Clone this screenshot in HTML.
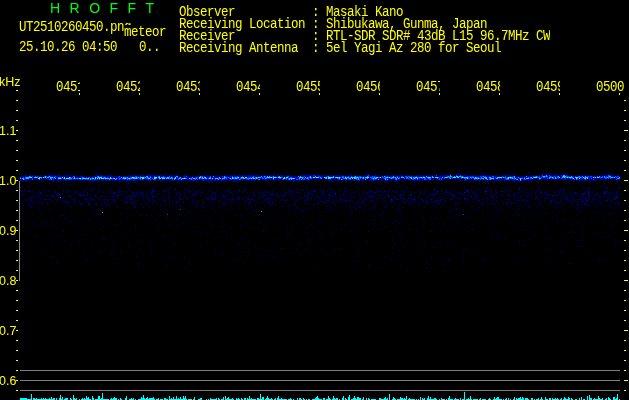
<!DOCTYPE html>
<html lang="en">
<head>
<meta charset="utf-8">
<title>HROFFT</title>
<style>
html,body{margin:0;padding:0;background:#000;}
body{width:629px;height:400px;overflow:hidden;position:relative;color:#ff0;}
.tl{top:78px;}
.g{margin-top:1px;will-change:transform;position:absolute;font-family:"Liberation Mono",monospace;font-size:12.5px;letter-spacing:-0.5px;line-height:15px;height:15px;white-space:pre;transform-origin:0 0;transform:scaleY(1.2133);color:#ffff00;overflow:hidden;}
.a{will-change:transform;position:absolute;left:-1px;font-family:"Liberation Sans",sans-serif;font-size:12.5px;line-height:20px;height:20px;white-space:pre;color:#ffff00;}
.t{will-change:transform;position:absolute;white-space:pre;word-spacing:5.6px;font-family:"Liberation Sans",sans-serif;font-size:14px;line-height:16px;color:#00ff00;top:0px;}
svg{position:absolute;left:0;top:0;}
.bg{background:#000;}
</style>
</head>
<body>
<svg width="629" height="400" viewBox="0 0 629 400" shape-rendering="crispEdges">
<g transform="translate(0,0.5)" stroke-width="1" fill="none">
<path stroke="#000088" d="M270 174h1M277 174h1M368 174h1M406 174h1M444 174h1M445 174h1M456 174h1M458 174h1M542 174h1M550 174h1M556 174h1M557 174h1M561 174h1M563 174h1M600 174h1M34 175h1M35 175h1M37 175h1M44 175h1M48 175h1M50 175h1M51 175h1M52 175h1M53 175h1M54 175h1M55 175h1M57 175h1M58 175h1M73 175h1M74 175h1M95 175h1M96 175h1M97 175h1M98 175h1M100 175h1M102 175h1M105 175h1M110 175h1M111 175h1M114 175h1M130 175h1M132 175h1M133 175h1M134 175h1M135 175h1M138 175h1M143 175h1M147 175h1M148 175h1M149 175h1M150 175h1M154 175h1M155 175h1M156 175h1M157 175h1M158 175h1M162 175h1M169 175h1M177 175h1M185 175h1M186 175h1M199 175h1M203 175h1M207 175h1M209 175h1M212 175h1M219 175h1M224 175h1M225 175h1M230 175h1M232 175h1M234 175h1M235 175h1M241 175h1M243 175h1M244 175h1M248 175h1M251 175h1M253 175h1M254 175h1M255 175h1M256 175h1M257 175h1M259 175h1M264 175h1M265 175h1M266 175h1M267 175h1M269 175h1M281 175h1M282 175h1M284 175h1M298 175h1M301 175h1M303 175h1M304 175h1M305 175h1M307 175h1M308 175h1M309 175h1M311 175h1M315 175h1M319 175h1M323 175h1M326 175h1M328 175h1M330 175h1M336 175h1M338 175h1M340 175h1M341 175h1M342 175h1M343 175h1M348 175h1M350 175h1M351 175h1M354 175h1M356 175h1M359 175h1M365 175h1M369 175h1M375 175h1M381 175h1M385 175h1M387 175h1M390 175h1M393 175h1M394 175h1M396 175h1M397 175h1M399 175h1M400 175h1M401 175h1M402 175h1M408 175h1M409 175h1M413 175h1M416 175h1M419 175h1M420 175h1M421 175h1M423 175h1M424 175h1M426 175h1M431 175h1M434 175h1M435 175h1M439 175h1M440 175h1M441 175h1M448 175h1M451 175h1M462 175h1M463 175h1M464 175h1M465 175h1M466 175h1M469 175h1M471 175h1M474 175h1M476 175h1M478 175h1M483 175h1M484 175h1M486 175h1M493 175h1M496 175h1M501 175h1M503 175h1M504 175h1M505 175h1M506 175h1M507 175h1M510 175h1M513 175h1M527 175h1M531 175h1M532 175h1M535 175h1M536 175h1M539 175h1M540 175h1M541 175h1M554 175h1M558 175h1M560 175h1M572 175h1M576 175h1M581 175h1M582 175h1M586 175h1M589 175h1M591 175h1M594 175h1M597 175h1M602 175h1M607 175h1M611 175h1M612 175h1M20 176h1M21 176h1M23 176h1M68 176h1M72 176h1M88 176h1M89 176h1M92 176h1M93 176h1M106 176h1M109 176h1M120 176h1M125 176h1M127 176h1M128 176h1M139 176h1M151 176h1M152 176h1M172 176h1M174 176h1M178 176h1M179 176h1M188 176h1M191 176h1M192 176h1M195 176h1M196 176h1M198 176h1M208 176h1M214 176h1M215 176h1M216 176h1M218 176h1M231 176h1M291 176h1M297 176h1M299 176h1M491 176h1M494 176h1M517 176h1M519 176h1M522 176h1M523 176h1M524 176h1M525 176h1M30 179h1M37 179h1M41 179h1M42 179h1M48 179h1M252 179h1M260 179h1M262 179h1M268 179h1M272 179h1M275 179h1M277 179h1M278 179h1M279 179h1M281 179h1M311 179h1M312 179h1M315 179h1M317 179h1M319 179h1M321 179h1M325 179h1M332 179h1M335 179h1M361 179h1M369 179h1M377 179h1M379 179h1M382 179h1M401 179h1M404 179h1M405 179h1M434 179h1M436 179h1M437 179h1M450 179h1M454 179h1M455 179h1M457 179h1M459 179h1M460 179h1M466 179h1M471 179h1M501 179h1M529 179h1M537 179h1M542 179h1M546 179h1M547 179h1M548 179h1M552 179h1M554 179h1M555 179h1M556 179h1M557 179h1M558 179h1M565 179h1M566 179h1M567 179h1M571 179h1M589 179h1M591 179h1M592 179h1M600 179h1M601 179h1M604 179h1M606 179h1M607 179h1M608 179h1M611 179h1M614 179h1M20 180h1M22 180h1M26 180h1M27 180h1M51 180h1M52 180h1M61 180h1M66 180h1M67 180h1M71 180h1M73 180h1M75 180h1M78 180h1M79 180h1M80 180h1M81 180h1M83 180h1M85 180h1M86 180h1M87 180h1M89 180h1M93 180h1M94 180h1M96 180h1M98 180h1M100 180h1M103 180h1M105 180h1M107 180h1M112 180h1M115 180h1M116 180h1M119 180h1M120 180h1M121 180h1M122 180h1M123 180h1M130 180h1M137 180h1M147 180h1M148 180h1M154 180h1M158 180h1M160 180h1M162 180h1M164 180h1M171 180h1M173 180h1M176 180h1M178 180h1M179 180h1M181 180h1M183 180h1M185 180h1M189 180h1M191 180h1M192 180h1M194 180h1M195 180h1M199 180h1M200 180h1M202 180h1M204 180h1M207 180h1M210 180h1M211 180h1M212 180h1M215 180h1M216 180h1M217 180h1M218 180h1M220 180h1M223 180h1M224 180h1M228 180h1M231 180h1M233 180h1M236 180h1M242 180h1M244 180h1M246 180h1M253 180h1M254 180h1M255 180h1M258 180h1M265 180h1M266 180h1M282 180h1M284 180h1M287 180h1M289 180h1M290 180h1M292 180h1M295 180h1M296 180h1M307 180h1M308 180h1M309 180h1M326 180h1M330 180h1M337 180h1M338 180h1M345 180h1M346 180h1M347 180h1M348 180h1M353 180h1M357 180h1M378 180h1M380 180h1M384 180h1M386 180h1M388 180h1M391 180h1M397 180h1M399 180h1M414 180h1M415 180h1M418 180h1M422 180h1M424 180h1M425 180h1M427 180h1M429 180h1M440 180h1M441 180h1M464 180h1M467 180h1M473 180h1M476 180h1M481 180h1M487 180h1M488 180h1M490 180h1M494 180h1M496 180h1M498 180h1M506 180h1M510 180h1M514 180h1M516 180h1M517 180h1M521 180h1M524 180h1M525 180h1M526 180h1M527 180h1M528 180h1M531 180h1M573 180h1M574 180h1M579 180h1M582 180h1M586 180h1M588 180h1M594 180h1M617 180h1M127 181h1M294 181h1M519 181h1M522 181h1"/>
<path stroke="#0050ff" d="M314 175h1M368 175h1M436 175h1M456 175h1M460 175h1M542 175h1M549 175h1M566 175h1M608 175h1M609 175h1M30 176h1M32 176h1M35 176h1M37 176h1M44 176h1M46 176h1M48 176h1M50 176h1M55 176h1M73 176h1M74 176h1M97 176h1M101 176h1M119 176h1M135 176h1M136 176h1M140 176h1M150 176h1M154 176h1M158 176h1M163 176h1M169 176h1M186 176h1M201 176h1M202 176h1M204 176h1M210 176h1M222 176h1M232 176h1M237 176h1M242 176h1M253 176h1M265 176h1M278 176h1M287 176h1M288 176h1M304 176h1M309 176h1M319 176h1M327 176h1M342 176h1M343 176h1M345 176h1M348 176h1M351 176h1M354 176h1M357 176h1M359 176h1M360 176h1M368 176h1M372 176h1M374 176h1M382 176h1M385 176h1M387 176h1M397 176h1M401 176h1M402 176h1M405 176h1M406 176h1M408 176h1M409 176h1M411 176h1M416 176h1M423 176h1M447 176h1M449 176h1M458 176h1M461 176h1M467 176h1M470 176h1M472 176h1M480 176h1M482 176h1M485 176h1M492 176h1M493 176h1M502 176h1M505 176h1M510 176h1M513 176h1M533 176h1M535 176h1M537 176h1M539 176h1M547 176h1M551 176h1M554 176h1M557 176h1M566 176h1M568 176h1M575 176h1M578 176h1M587 176h1M588 176h1M590 176h1M591 176h1M597 176h1M602 176h1M606 176h1M615 176h1M617 176h1M618 176h1M20 177h1M23 177h1M25 177h1M72 177h1M86 177h1M88 177h1M89 177h1M92 177h1M105 177h1M107 177h1M118 177h1M126 177h1M139 177h1M172 177h1M177 177h1M179 177h1M184 177h1M196 177h1M197 177h1M209 177h1M233 177h1M234 177h1M248 177h1M290 177h1M291 177h1M373 177h1M493 177h1M495 177h1M524 177h1M32 178h1M41 178h1M46 178h1M226 178h1M238 178h1M252 178h1M262 178h1M263 178h1M269 178h1M279 178h1M280 178h1M310 178h1M311 178h1M320 178h1M337 178h1M360 178h1M365 178h1M366 178h1M371 178h1M390 178h1M392 178h1M393 178h1M395 178h1M399 178h1M404 178h1M406 178h1M407 178h1M408 178h1M410 178h1M437 178h1M439 178h1M441 178h1M444 178h1M449 178h1M452 178h1M461 178h1M464 178h1M466 178h1M469 178h1M471 178h1M499 178h1M501 178h1M529 178h1M530 178h1M531 178h1M547 178h1M552 178h1M553 178h1M554 178h1M556 178h1M558 178h1M561 178h1M565 178h1M589 178h1M591 178h1M605 178h1M606 178h1M608 178h1M610 178h1M24 179h1M32 179h1M39 179h1M49 179h1M58 179h1M65 179h1M69 179h1M70 179h1M80 179h1M82 179h1M85 179h1M87 179h1M88 179h1M92 179h1M94 179h1M95 179h1M97 179h1M99 179h1M105 179h1M116 179h1M119 179h1M124 179h1M129 179h1M130 179h1M140 179h1M142 179h1M148 179h1M150 179h1M153 179h1M154 179h1M159 179h1M172 179h1M178 179h1M191 179h1M195 179h1M197 179h1M215 179h1M222 179h1M231 179h1M240 179h1M247 179h1M248 179h1M255 179h1M258 179h1M273 179h1M283 179h1M286 179h1M288 179h1M296 179h1M297 179h1M299 179h1M303 179h1M304 179h1M308 179h1M339 179h1M342 179h1M346 179h1M349 179h1M350 179h1M356 179h1M357 179h1M359 179h1M373 179h1M374 179h1M375 179h1M386 179h1M395 179h1M409 179h1M412 179h1M413 179h1M417 179h1M424 179h1M425 179h1M429 179h1M430 179h1M439 179h1M441 179h1M465 179h1M474 179h1M477 179h1M480 179h1M483 179h1M486 179h1M489 179h1M493 179h1M506 179h1M507 179h1M508 179h1M514 179h1M524 179h1M525 179h1M539 179h1M574 179h1M576 179h1M577 179h1M585 179h1M593 179h1M616 179h1"/>
<path stroke="#00c8ff" d="M450 176h1M456 176h1M459 176h1M543 176h1M544 176h1M546 176h1M564 176h1M565 176h1M609 176h1M26 177h1M27 177h1M28 177h1M29 177h1M34 177h1M35 177h1M40 177h1M41 177h1M47 177h1M48 177h1M50 177h1M51 177h1M74 177h1M99 177h1M101 177h1M104 177h1M121 177h1M123 177h1M136 177h1M138 177h1M141 177h1M145 177h1M147 177h1M150 177h1M158 177h1M161 177h1M163 177h1M168 177h1M204 177h1M219 177h1M224 177h1M225 177h1M235 177h1M237 177h1M242 177h1M252 177h1M253 177h1M256 177h1M259 177h1M260 177h1M269 177h1M273 177h1M276 177h1M301 177h1M302 177h1M305 177h1M320 177h1M325 177h1M332 177h1M335 177h1M338 177h1M342 177h1M347 177h1M348 177h1M352 177h1M353 177h1M355 177h1M356 177h1M360 177h1M365 177h1M366 177h1M374 177h1M376 177h1M386 177h1M392 177h1M393 177h1M395 177h1M401 177h1M402 177h1M403 177h1M407 177h1M411 177h1M413 177h1M420 177h1M427 177h1M430 177h1M432 177h1M433 177h1M435 177h1M442 177h1M445 177h1M447 177h1M449 177h1M457 177h1M461 177h1M463 177h1M464 177h1M465 177h1M466 177h1M467 177h1M470 177h1M473 177h1M481 177h1M484 177h1M485 177h1M486 177h1M489 177h1M490 177h1M497 177h1M499 177h1M501 177h1M503 177h1M509 177h1M511 177h1M512 177h1M514 177h1M531 177h1M533 177h1M549 177h1M550 177h1M555 177h1M562 177h1M571 177h1M572 177h1M575 177h1M577 177h1M580 177h1M585 177h1M586 177h1M587 177h1M607 177h1M611 177h1M612 177h1M614 177h1M619 177h1M20 178h1M22 178h1M23 178h1M26 178h1M27 178h1M50 178h1M55 178h1M58 178h1M69 178h1M71 178h1M77 178h1M82 178h1M85 178h1M86 178h1M87 178h1M90 178h1M92 178h1M102 178h1M106 178h1M107 178h1M108 178h1M111 178h1M113 178h1M116 178h1M124 178h1M128 178h1M131 178h1M133 178h1M134 178h1M135 178h1M140 178h1M148 178h1M159 178h1M168 178h1M170 178h1M172 178h1M174 178h1M179 178h1M182 178h1M183 178h1M185 178h1M191 178h1M193 178h1M196 178h1M202 178h1M203 178h1M205 178h1M206 178h1M210 178h1M215 178h1M216 178h1M220 178h1M222 178h1M223 178h1M224 178h1M233 178h1M235 178h1M243 178h1M244 178h1M249 178h1M254 178h1M265 178h1M289 178h1M290 178h1M292 178h1M294 178h1M299 178h1M302 178h1M307 178h1M326 178h1M329 178h1M330 178h1M339 178h1M345 178h1M349 178h1M350 178h1M355 178h1M356 178h1M358 178h1M375 178h1M376 178h1M385 178h1M398 178h1M474 178h1M475 178h1M482 178h1M483 178h1M485 178h1M490 178h1M492 178h1M493 178h1M496 178h1M497 178h1M507 178h1M512 178h1M515 178h1M520 178h1M521 178h1M524 178h1M526 178h1M528 178h1M584 178h1"/>
<path stroke="#0000e8" d="M270 175h1M277 175h1M313 175h1M443 175h1M457 175h1M544 175h1M545 175h1M548 175h1M555 175h1M556 175h1M561 175h1M562 175h1M565 175h1M567 175h1M25 176h1M26 176h1M28 176h1M47 176h1M52 176h1M53 176h1M54 176h1M56 176h1M59 176h1M62 176h1M63 176h1M81 176h1M82 176h1M94 176h1M95 176h1M100 176h1M102 176h1M103 176h1M104 176h1M110 176h1M112 176h1M114 176h1M118 176h1M123 176h1M124 176h1M130 176h1M131 176h1M132 176h1M137 176h1M143 176h1M148 176h1M149 176h1M155 176h1M156 176h1M157 176h1M162 176h1M164 176h1M171 176h1M184 176h1M185 176h1M199 176h1M203 176h1M207 176h1M209 176h1M212 176h1M225 176h1M226 176h1M227 176h1M230 176h1M234 176h1M235 176h1M236 176h1M238 176h1M239 176h1M240 176h1M244 176h1M246 176h1M248 176h1M249 176h1M250 176h1M251 176h1M252 176h1M254 176h1M255 176h1M257 176h1M259 176h1M260 176h1M263 176h1M270 176h1M271 176h1M272 176h1M275 176h1M276 176h1M281 176h1M284 176h1M289 176h1M301 176h1M303 176h1M312 176h1M314 176h1M317 176h1M320 176h1M321 176h1M322 176h1M325 176h1M326 176h1M329 176h1M331 176h1M334 176h1M335 176h1M337 176h1M339 176h1M340 176h1M341 176h1M347 176h1M349 176h1M350 176h1M356 176h1M358 176h1M361 176h1M363 176h1M364 176h1M365 176h1M369 176h1M370 176h1M373 176h1M375 176h1M376 176h1M381 176h1M386 176h1M389 176h1M392 176h1M395 176h1M398 176h1M407 176h1M412 176h1M414 176h1M415 176h1M417 176h1M418 176h1M419 176h1M420 176h1M422 176h1M424 176h1M427 176h1M428 176h1M430 176h1M431 176h1M436 176h1M439 176h1M440 176h1M443 176h1M446 176h1M452 176h1M455 176h1M463 176h1M468 176h1M469 176h1M471 176h1M473 176h1M474 176h1M477 176h1M478 176h1M479 176h1M484 176h1M486 176h1M489 176h1M490 176h1M499 176h1M503 176h1M509 176h1M512 176h1M530 176h1M534 176h1M541 176h1M552 176h1M570 176h1M572 176h1M573 176h1M580 176h1M581 176h1M584 176h1M586 176h1M589 176h1M592 176h1M593 176h1M594 176h1M596 176h1M600 176h1M601 176h1M603 176h1M605 176h1M611 176h1M612 176h1M613 176h1M619 176h1M24 177h1M61 177h1M66 177h1M67 177h1M68 177h1M71 177h1M77 177h1M79 177h1M80 177h1M81 177h1M94 177h1M106 177h1M108 177h1M109 177h1M111 177h1M113 177h1M114 177h1M115 177h1M119 177h1M120 177h1M122 177h1M129 177h1M151 177h1M152 177h1M170 177h1M174 177h1M185 177h1M186 177h1M187 177h1M189 177h1M190 177h1M194 177h1M206 177h1M207 177h1M212 177h1M213 177h1M214 177h1M218 177h1M220 177h1M222 177h1M231 177h1M288 177h1M289 177h1M295 177h1M296 177h1M298 177h1M480 177h1M494 177h1M506 177h1M516 177h1M517 177h1M519 177h1M520 177h1M521 177h1M525 177h1M545 177h1M30 178h1M31 178h1M34 178h1M35 178h1M36 178h1M37 178h1M42 178h1M48 178h1M52 178h1M225 178h1M227 178h1M239 178h1M258 178h1M259 178h1M260 178h1M261 178h1M264 178h1M267 178h1M268 178h1M271 178h1M272 178h1M274 178h1M275 178h1M277 178h1M281 178h1M309 178h1M314 178h1M315 178h1M316 178h1M332 178h1M334 178h1M335 178h1M347 178h1M359 178h1M364 178h1M368 178h1M370 178h1M379 178h1M381 178h1M383 178h1M386 178h1M387 178h1M388 178h1M394 178h1M400 178h1M405 178h1M412 178h1M416 178h1M418 178h1M420 178h1M421 178h1M423 178h1M431 178h1M432 178h1M436 178h1M443 178h1M445 178h1M447 178h1M448 178h1M451 178h1M455 178h1M458 178h1M459 178h1M468 178h1M470 178h1M472 178h1M498 178h1M500 178h1M533 178h1M537 178h1M541 178h1M544 178h1M545 178h1M548 178h1M557 178h1M560 178h1M562 178h1M563 178h1M567 178h1M568 178h1M571 178h1M578 178h1M581 178h1M583 178h1M590 178h1M597 178h1M600 178h1M601 178h1M604 178h1M611 178h1M615 178h1M616 178h1M20 179h1M27 179h1M28 179h1M38 179h1M50 179h1M52 179h1M53 179h1M54 179h1M56 179h1M60 179h1M63 179h1M64 179h1M66 179h1M67 179h1M68 179h1M71 179h1M73 179h1M75 179h1M76 179h1M77 179h1M83 179h1M86 179h1M89 179h1M93 179h1M96 179h1M101 179h1M103 179h1M107 179h1M108 179h1M111 179h1M112 179h1M114 179h1M118 179h1M120 179h1M123 179h1M125 179h1M126 179h1M128 179h1M131 179h1M132 179h1M133 179h1M135 179h1M138 179h1M139 179h1M141 179h1M143 179h1M145 179h1M147 179h1M149 179h1M151 179h1M155 179h1M161 179h1M162 179h1M163 179h1M164 179h1M165 179h1M166 179h1M170 179h1M173 179h1M175 179h1M176 179h1M177 179h1M180 179h1M182 179h1M183 179h1M188 179h1M189 179h1M190 179h1M192 179h1M193 179h1M194 179h1M196 179h1M198 179h1M201 179h1M204 179h1M206 179h1M207 179h1M208 179h1M210 179h1M211 179h1M212 179h1M217 179h1M219 179h1M221 179h1M224 179h1M225 179h1M227 179h1M230 179h1M233 179h1M234 179h1M235 179h1M236 179h1M242 179h1M246 179h1M249 179h1M250 179h1M251 179h1M253 179h1M265 179h1M266 179h1M267 179h1M274 179h1M282 179h1M284 179h1M285 179h1M293 179h1M300 179h1M305 179h1M309 179h1M327 179h1M330 179h1M337 179h1M338 179h1M345 179h1M348 179h1M353 179h1M362 179h1M363 179h1M370 179h1M371 179h1M372 179h1M376 179h1M388 179h1M391 179h1M397 179h1M398 179h1M399 179h1M408 179h1M411 179h1M414 179h1M415 179h1M416 179h1M418 179h1M419 179h1M421 179h1M422 179h1M426 179h1M427 179h1M428 179h1M438 179h1M464 179h1M475 179h1M476 179h1M479 179h1M481 179h1M484 179h1M488 179h1M491 179h1M495 179h1M496 179h1M498 179h1M505 179h1M509 179h1M511 179h1M515 179h1M521 179h1M523 179h1M527 179h1M528 179h1M531 179h1M570 179h1M572 179h1M573 179h1M579 179h1M580 179h1M581 179h1M584 179h1M586 179h1M594 179h1M617 179h1M619 179h1M127 180h1M293 180h1M294 180h1M519 180h1"/>
<path stroke="#000070" d="M42 171h1M406 171h1M434 171h1M568 171h1M51 172h1M53 172h1M68 172h1M96 172h1M178 172h1M219 172h1M234 172h1M244 172h1M250 172h1M275 172h1M285 172h1M383 172h1M468 172h1M486 172h1M508 172h1M528 172h1M596 172h1M100 173h1M166 173h1M214 173h1M270 173h1M355 173h1M389 173h1M440 173h1M456 173h1M457 173h1M458 173h1M459 173h1M466 173h1M481 173h1M482 173h1M492 173h1M514 173h1M543 173h1M546 173h1M550 173h1M557 173h1M562 173h1M566 173h1M567 173h1M603 173h1M609 173h1M25 174h1M26 174h1M30 174h1M50 174h1M58 174h1M67 174h1M68 174h1M96 174h1M97 174h1M107 174h1M110 174h1M122 174h1M130 174h1M135 174h1M142 174h1M143 174h1M148 174h1M149 174h1M150 174h1M159 174h1M163 174h1M164 174h1M165 174h1M168 174h1M171 174h1M176 174h1M199 174h1M212 174h1M229 174h1M230 174h1M239 174h1M246 174h1M251 174h1M254 174h1M256 174h1M273 174h1M279 174h1M282 174h1M285 174h1M304 174h1M305 174h1M316 174h1M319 174h1M323 174h1M332 174h1M345 174h1M350 174h1M351 174h1M355 174h1M365 174h1M367 174h1M369 174h1M376 174h1M380 174h1M381 174h1M388 174h1M397 174h1M403 174h1M405 174h1M418 174h1M429 174h1M432 174h1M433 174h1M449 174h1M451 174h1M453 174h1M461 174h1M464 174h1M465 174h1M469 174h1M476 174h1M482 174h1M487 174h1M496 174h1M498 174h1M505 174h1M507 174h1M513 174h1M541 174h1M553 174h1M570 174h1M579 174h1M583 174h1M584 174h1M587 174h1M598 174h1M602 174h1M603 174h1M606 174h1M607 174h1M611 174h1M612 174h1M613 174h1M617 174h1M21 175h1M67 175h1M70 175h1M71 175h1M75 175h1M109 175h1M152 175h1M174 175h1M189 175h1M216 175h1M217 175h1M221 175h1M231 175h1M294 175h1M35 180h1M41 180h1M42 180h1M226 180h1M279 180h1M319 180h1M331 180h1M332 180h1M361 180h1M368 180h1M369 180h1M400 180h1M402 180h1M405 180h1M407 180h1M423 180h1M437 180h1M459 180h1M460 180h1M462 180h1M466 180h1M471 180h1M499 180h1M500 180h1M535 180h1M541 180h1M559 180h1M571 180h1M590 180h1M591 180h1M598 180h1M599 180h1M604 180h1M605 180h1M612 180h1M23 181h1M26 181h1M51 181h1M53 181h1M56 181h1M58 181h1M67 181h1M83 181h1M93 181h1M98 181h1M109 181h1M114 181h1M118 181h1M119 181h1M144 181h1M151 181h1M165 181h1M173 181h1M177 181h1M182 181h1M192 181h1M202 181h1M205 181h1M208 181h1M211 181h1M218 181h1M221 181h1M224 181h1M232 181h1M234 181h1M236 181h1M239 181h1M247 181h1M254 181h1M329 181h1M337 181h1M350 181h1M356 181h1M359 181h1M362 181h1M375 181h1M376 181h1M387 181h1M388 181h1M391 181h1M395 181h1M396 181h1M414 181h1M416 181h1M428 181h1M458 181h1M486 181h1M487 181h1M496 181h1M504 181h1M508 181h1M514 181h1M523 181h1M531 181h1M569 181h1M574 181h1M580 181h1M616 181h1M617 181h1M127 182h1M135 182h1M211 182h1M280 182h1M298 182h1M386 182h1M413 182h1M415 182h1M519 182h1M529 182h1M536 182h1M538 182h1M49 183h1M63 183h1M144 183h1M206 183h1M337 183h1M396 183h1M437 183h1M487 183h1M516 183h1M569 183h1M595 183h1M127 184h1M179 184h1M293 184h1"/>
<path stroke="#0000a0" d="M444 176h1M32 177h1M42 177h1M203 177h1M247 177h1M254 177h1M381 177h1M398 177h1M400 177h1M441 177h1M487 177h1M529 177h1M548 177h1M554 177h1M560 177h1M582 177h1M592 177h1M596 177h1M21 178h1M24 178h1M96 178h1M117 178h1M158 178h1M221 178h1M301 178h1M351 178h1M426 178h1M484 178h1M494 178h1M516 178h1M574 178h1M575 178h1"/>
<path stroke="#000098" d="M312 175h1M445 175h1M459 175h1M610 175h1M22 176h1M27 176h1M31 176h1M36 176h1M38 176h1M39 176h1M40 176h1M51 176h1M57 176h1M60 176h1M64 176h1M69 176h1M99 176h1M105 176h1M107 176h1M111 176h1M122 176h1M133 176h1M138 176h1M141 176h1M144 176h1M145 176h1M153 176h1M161 176h1M165 176h1M166 176h1M167 176h1M168 176h1M170 176h1M175 176h1M183 176h1M205 176h1M219 176h1M223 176h1M228 176h1M229 176h1M262 176h1M266 176h1M268 176h1M274 176h1M277 176h1M282 176h1M302 176h1M306 176h1M308 176h1M313 176h1M318 176h1M332 176h1M336 176h1M344 176h1M346 176h1M352 176h1M366 176h1M371 176h1M377 176h1M378 176h1M388 176h1M390 176h1M391 176h1M394 176h1M396 176h1M399 176h1M403 176h1M413 176h1M425 176h1M429 176h1M434 176h1M435 176h1M441 176h1M442 176h1M465 176h1M475 176h1M476 176h1M481 176h1M487 176h1M488 176h1M496 176h1M497 176h1M506 176h1M508 176h1M515 176h1M527 176h1M528 176h1M529 176h1M531 176h1M538 176h1M548 176h1M553 176h1M559 176h1M569 176h1M577 176h1M595 176h1M607 176h1M614 176h1M616 176h1M22 177h1M73 177h1M76 177h1M78 177h1M84 177h1M91 177h1M93 177h1M112 177h1M117 177h1M128 177h1M146 177h1M173 177h1M181 177h1M183 177h1M191 177h1M195 177h1M198 177h1M208 177h1M215 177h1M216 177h1M217 177h1M292 177h1M293 177h1M294 177h1M297 177h1M304 177h1M482 177h1M491 177h1M496 177h1M515 177h1M522 177h1M523 177h1M526 177h1M527 177h1M29 178h1M40 178h1M44 178h1M47 178h1M270 178h1M276 178h1M278 178h1M312 178h1M313 178h1M317 178h1M318 178h1M319 178h1M322 178h1M331 178h1M336 178h1M342 178h1M361 178h1M377 178h1M378 178h1M389 178h1M401 178h1M402 178h1M403 178h1M427 178h1M433 178h1M442 178h1M446 178h1M454 178h1M456 178h1M457 178h1M534 178h1M535 178h1M536 178h1M538 178h1M542 178h1M543 178h1M546 178h1M551 178h1M566 178h1M569 178h1M592 178h1M593 178h1M596 178h1M599 178h1M602 178h1M603 178h1M612 178h1M21 179h1M22 179h1M25 179h1M26 179h1M61 179h1M72 179h1M74 179h1M79 179h1M81 179h1M84 179h1M91 179h1M98 179h1M102 179h1M106 179h1M110 179h1M117 179h1M122 179h1M137 179h1M146 179h1M167 179h1M168 179h1M169 179h1M185 179h1M186 179h1M187 179h1M199 179h1M202 179h1M203 179h1M205 179h1M213 179h1M214 179h1M220 179h1M223 179h1M232 179h1M237 179h1M238 179h1M243 179h1M244 179h1M257 179h1M290 179h1M292 179h1M298 179h1M306 179h1M307 179h1M328 179h1M329 179h1M343 179h1M344 179h1M352 179h1M354 179h1M355 179h1M380 179h1M381 179h1M432 179h1M433 179h1M467 179h1M492 179h1M494 179h1M497 179h1M503 179h1M510 179h1M513 179h1M518 179h1M519 179h1M526 179h1M578 179h1M582 179h1M588 179h1M618 179h1M103 205h1M255 205h1M359 206h1M454 206h1M555 206h1M143 207h1M385 207h1M39 209h1M186 209h1M364 209h1M419 209h1M576 209h1M171 210h1M398 210h1M518 210h1M332 211h1M189 212h1M301 212h1M400 212h1M579 212h1M519 215h1M457 217h1M491 217h1M241 218h1M260 222h1M107 223h1M545 224h1M523 226h1M409 229h1M263 231h1M368 231h1M307 232h1M569 232h1M226 234h1M104 238h1M79 241h1M519 241h1M524 245h1M281 248h1M249 250h1M561 251h1M358 252h1M111 254h1M444 258h1M261 260h1M569 263h1"/>
<path stroke="#0000d0" d="M313 174h1M450 174h1M460 174h1M546 174h1M548 174h1M564 174h1M25 175h1M30 175h1M32 175h1M40 175h1M45 175h1M49 175h1M59 175h1M64 175h1M69 175h1M81 175h1M101 175h1M137 175h1M141 175h1M146 175h1M153 175h1M160 175h1M170 175h1M175 175h1M176 175h1M184 175h1M202 175h1M205 175h1M239 175h1M242 175h1M245 175h1M249 175h1M250 175h1M263 175h1M273 175h1M280 175h1M287 175h1M288 175h1M302 175h1M306 175h1M310 175h1M317 175h1M318 175h1M321 175h1M324 175h1M331 175h1M335 175h1M337 175h1M366 175h1M367 175h1M374 175h1M377 175h1M386 175h1M392 175h1M407 175h1M417 175h1M429 175h1M446 175h1M447 175h1M473 175h1M480 175h1M482 175h1M485 175h1M489 175h1M490 175h1M508 175h1M514 175h1M547 175h1M551 175h1M553 175h1M585 175h1M604 175h1M605 175h1M606 175h1M617 175h1M618 175h1M61 176h1M67 176h1M76 176h1M77 176h1M80 176h1M84 176h1M86 176h1M116 176h1M197 176h1M290 176h1M292 176h1M295 176h1M495 176h1M29 179h1M31 179h1M36 179h1M44 179h1M45 179h1M226 179h1M264 179h1M270 179h1M271 179h1M331 179h1M389 179h1M442 179h1M468 179h1M469 179h1M500 179h1M502 179h1M530 179h1M533 179h1M551 179h1M560 179h1M563 179h1M564 179h1M569 179h1M596 179h1M605 179h1M21 180h1M25 180h1M53 180h1M57 180h1M58 180h1M63 180h1M65 180h1M90 180h1M91 180h1M92 180h1M95 180h1M101 180h1M102 180h1M106 180h1M109 180h1M113 180h1M114 180h1M126 180h1M128 180h1M133 180h1M134 180h1M135 180h1M140 180h1M142 180h1M150 180h1M155 180h1M161 180h1M169 180h1M180 180h1M190 180h1M193 180h1M203 180h1M206 180h1M208 180h1M214 180h1M221 180h1M234 180h1M235 180h1M238 180h1M248 180h1M251 180h1M273 180h1M299 180h1M303 180h1M328 180h1M351 180h1M352 180h1M354 180h1M359 180h1M363 180h1M365 180h1M371 180h1M372 180h1M373 180h1M381 180h1M385 180h1M387 180h1M395 180h1M396 180h1M412 180h1M417 180h1M419 180h1M465 180h1M475 180h1M479 180h1M485 180h1M503 180h1M504 180h1M509 180h1M512 180h1M513 180h1M518 180h1M576 180h1M581 180h1M584 180h1M585 180h1M593 180h1M293 181h1"/>
<path stroke="#00b0ff" d="M450 175h1M546 175h1M563 175h1M564 175h1M29 176h1M45 176h1M49 176h1M98 176h1M146 176h1M147 176h1M159 176h1M176 176h1M177 176h1M200 176h1M213 176h1M224 176h1M261 176h1M264 176h1M267 176h1M269 176h1M273 176h1M279 176h1M298 176h1M300 176h1M310 176h1M315 176h1M328 176h1M333 176h1M355 176h1M367 176h1M384 176h1M393 176h1M426 176h1M432 176h1M448 176h1M451 176h1M454 176h1M460 176h1M462 176h1M483 176h1M514 176h1M526 176h1M536 176h1M558 176h1M571 176h1M579 176h1M582 176h1M585 176h1M599 176h1M604 176h1M610 176h1M70 177h1M125 177h1M127 177h1M134 177h1M140 177h1M162 177h1M180 177h1M192 177h1M210 177h1M299 177h1M307 177h1M518 177h1M28 178h1M321 178h1M325 178h1M363 178h1M367 178h1M391 178h1M396 178h1M450 178h1M532 178h1M539 178h1M540 178h1M549 178h1M555 178h1M23 179h1M51 179h1M90 179h1M109 179h1M115 179h1M174 179h1M181 179h1M218 179h1M239 179h1M259 179h1M289 179h1M291 179h1M301 179h1M341 179h1M358 179h1M365 179h1M378 179h1M385 179h1M387 179h1M396 179h1M487 179h1M490 179h1M516 179h1M517 179h1M520 180h1"/>
<path stroke="#0068ff" d="M542 176h1M545 176h1M550 176h1M562 176h1M567 176h1M608 176h1M37 177h1M44 177h1M58 177h1M59 177h1M60 177h1M82 177h1M83 177h1M96 177h1M97 177h1M103 177h1M124 177h1M130 177h1M131 177h1M135 177h1M137 177h1M144 177h1M148 177h1M164 177h1M165 177h1M169 177h1M226 177h1M228 177h1M236 177h1M250 177h1M255 177h1M257 177h1M262 177h1M264 177h1M266 177h1M272 177h1M281 177h1M282 177h1M303 177h1M309 177h1M311 177h1M315 177h1M340 177h1M343 177h1M346 177h1M350 177h1M358 177h1M359 177h1M361 177h1M362 177h1M370 177h1M371 177h1M372 177h1M375 177h1M378 177h1M379 177h1M382 177h1M383 177h1M385 177h1M388 177h1M390 177h1M391 177h1M394 177h1M399 177h1M406 177h1M409 177h1M414 177h1M417 177h1M418 177h1M419 177h1M422 177h1M438 177h1M444 177h1M450 177h1M452 177h1M468 177h1M471 177h1M472 177h1M476 177h1M477 177h1M478 177h1M502 177h1M504 177h1M505 177h1M507 177h1M528 177h1M530 177h1M537 177h1M538 177h1M539 177h1M541 177h1M543 177h1M544 177h1M551 177h1M553 177h1M557 177h1M558 177h1M563 177h1M565 177h1M566 177h1M568 177h1M578 177h1M579 177h1M581 177h1M584 177h1M594 177h1M599 177h1M600 177h1M601 177h1M602 177h1M604 177h1M605 177h1M606 177h1M608 177h1M609 177h1M610 177h1M613 177h1M616 177h1M25 178h1M51 178h1M53 178h1M61 178h1M63 178h1M70 178h1M73 178h1M75 178h1M76 178h1M78 178h1M81 178h1M91 178h1M100 178h1M104 178h1M109 178h1M112 178h1M119 178h1M120 178h1M122 178h1M126 178h1M127 178h1M130 178h1M132 178h1M137 178h1M139 178h1M144 178h1M146 178h1M147 178h1M152 178h1M156 178h1M167 178h1M169 178h1M171 178h1M178 178h1M180 178h1M181 178h1M186 178h1M190 178h1M195 178h1M201 178h1M204 178h1M208 178h1M218 178h1M219 178h1M229 178h1M234 178h1M237 178h1M240 178h1M241 178h1M242 178h1M245 178h1M246 178h1M247 178h1M248 178h1M250 178h1M255 178h1M257 178h1M266 178h1M285 178h1M286 178h1M288 178h1M304 178h1M306 178h1M308 178h1M338 178h1M343 178h1M344 178h1M348 178h1M362 178h1M372 178h1M374 178h1M384 178h1M413 178h1M415 178h1M419 178h1M422 178h1M424 178h1M425 178h1M428 178h1M429 178h1M430 178h1M465 178h1M477 178h1M479 178h1M480 178h1M481 178h1M489 178h1M505 178h1M506 178h1M510 178h1M511 178h1M513 178h1M514 178h1M519 178h1M522 178h1M570 178h1M572 178h1M577 178h1M582 178h1M617 178h1M619 178h1M127 179h1"/>
<path stroke="#30ffd0" d="M457 176h1M563 176h1M30 177h1M31 177h1M36 177h1M39 177h1M43 177h1M45 177h1M52 177h1M54 177h1M62 177h1M64 177h1M69 177h1M95 177h1M98 177h1M100 177h1M110 177h1M132 177h1M133 177h1M142 177h1M143 177h1M154 177h1M155 177h1M156 177h1M159 177h1M167 177h1M171 177h1M175 177h1M199 177h1M200 177h1M202 177h1M205 177h1M232 177h1M238 177h1M241 177h1M243 177h1M245 177h1M246 177h1M258 177h1M267 177h1M268 177h1M270 177h1M271 177h1M274 177h1M275 177h1M278 177h1M279 177h1M280 177h1M284 177h1M286 177h1M287 177h1M300 177h1M310 177h1M313 177h1M314 177h1M316 177h1M317 177h1M318 177h1M324 177h1M326 177h1M328 177h1M329 177h1M330 177h1M331 177h1M333 177h1M336 177h1M337 177h1M339 177h1M345 177h1M351 177h1M354 177h1M357 177h1M363 177h1M367 177h1M368 177h1M377 177h1M380 177h1M387 177h1M389 177h1M397 177h1M410 177h1M415 177h1M416 177h1M421 177h1M423 177h1M424 177h1M428 177h1M429 177h1M436 177h1M437 177h1M446 177h1M453 177h1M454 177h1M455 177h1M458 177h1M462 177h1M475 177h1M498 177h1M500 177h1M508 177h1M510 177h1M534 177h1M535 177h1M536 177h1M552 177h1M559 177h1M564 177h1M567 177h1M569 177h1M570 177h1M576 177h1M583 177h1M593 177h1M595 177h1M597 177h1M598 177h1M38 178h1M39 178h1M59 178h1M60 178h1M64 178h1M66 178h1M67 178h1M68 178h1M74 178h1M79 178h1M80 178h1M83 178h1M84 178h1M88 178h1M93 178h1M95 178h1M97 178h1M99 178h1M101 178h1M103 178h1M105 178h1M110 178h1M114 178h1M123 178h1M125 178h1M129 178h1M136 178h1M142 178h1M143 178h1M149 178h1M154 178h1M155 178h1M160 178h1M162 178h1M163 178h1M164 178h1M166 178h1M175 178h1M184 178h1M189 178h1M194 178h1M199 178h1M209 178h1M212 178h1M217 178h1M230 178h1M232 178h1M236 178h1M251 178h1M253 178h1M256 178h1M273 178h1M283 178h1M284 178h1M291 178h1M293 178h1M328 178h1M346 178h1M352 178h1M354 178h1M373 178h1M411 178h1M414 178h1M417 178h1M467 178h1M476 178h1M478 178h1M486 178h1M491 178h1M508 178h1M527 178h1M573 178h1M576 178h1M579 178h1M585 178h1M587 178h1M618 178h1M520 179h1"/>
<path stroke="#0008ff" d="M549 176h1M555 176h1M556 176h1M561 176h1M33 177h1M38 177h1M46 177h1M49 177h1M53 177h1M55 177h1M56 177h1M57 177h1M102 177h1M149 177h1M157 177h1M160 177h1M166 177h1M176 177h1M201 177h1M223 177h1M227 177h1M229 177h1M230 177h1M239 177h1M240 177h1M249 177h1M251 177h1M261 177h1M263 177h1M265 177h1M277 177h1M283 177h1M285 177h1M306 177h1M308 177h1M312 177h1M319 177h1M321 177h1M322 177h1M323 177h1M327 177h1M334 177h1M341 177h1M344 177h1M349 177h1M364 177h1M369 177h1M384 177h1M396 177h1M404 177h1M405 177h1M408 177h1M412 177h1M425 177h1M426 177h1M431 177h1M434 177h1M439 177h1M440 177h1M443 177h1M448 177h1M451 177h1M456 177h1M459 177h1M460 177h1M469 177h1M474 177h1M483 177h1M488 177h1M492 177h1M513 177h1M532 177h1M540 177h1M542 177h1M546 177h1M547 177h1M556 177h1M561 177h1M573 177h1M574 177h1M588 177h1M589 177h1M590 177h1M591 177h1M603 177h1M615 177h1M617 177h1M618 177h1M54 178h1M57 178h1M62 178h1M65 178h1M72 178h1M89 178h1M94 178h1M98 178h1M115 178h1M118 178h1M121 178h1M138 178h1M141 178h1M145 178h1M150 178h1M151 178h1M153 178h1M157 178h1M161 178h1M165 178h1M173 178h1M176 178h1M177 178h1M187 178h1M188 178h1M192 178h1M197 178h1M198 178h1M200 178h1M207 178h1M211 178h1M213 178h1M214 178h1M228 178h1M231 178h1M287 178h1M295 178h1M296 178h1M297 178h1M298 178h1M300 178h1M303 178h1M305 178h1M327 178h1M333 178h1M341 178h1M357 178h1M397 178h1M440 178h1M463 178h1M473 178h1M487 178h1M488 178h1M495 178h1M504 178h1M509 178h1M517 178h1M518 178h1M523 178h1M525 178h1M580 178h1M586 178h1M594 178h1M294 179h1"/>
<path stroke="#000054" d="M209 182h1M381 182h1M485 183h1M330 184h1M503 184h1M69 185h1M115 185h1M483 185h1M603 186h1M129 187h1M130 187h1M186 187h1M357 187h1M541 187h1M584 187h1M616 187h1M65 188h1M87 188h1M98 188h1M127 188h1M155 188h1M169 188h1M246 188h1M253 188h1M285 188h1M329 188h1M383 188h1M406 188h1M477 188h1M487 188h1M515 188h1M561 188h1M30 189h1M38 189h1M44 189h1M47 189h1M57 189h1M63 189h1M89 189h1M98 189h1M100 189h1M108 189h1M119 189h1M150 189h1M153 189h1M158 189h1M184 189h1M209 189h1M238 189h1M284 189h1M285 189h1M289 189h1M292 189h1M297 189h1M318 189h1M333 189h1M341 189h1M359 189h1M378 189h1M401 189h1M418 189h1M447 189h1M494 189h1M550 189h1M616 189h1M32 190h1M39 190h1M63 190h1M68 190h1M86 190h1M101 190h1M108 190h1M111 190h1M118 190h1M119 190h1M130 190h1M137 190h1M139 190h1M148 190h1M152 190h1M164 190h1M184 190h1M188 190h1M201 190h1M210 190h1M225 190h1M238 190h1M275 190h1M282 190h1M303 190h1M315 190h1M324 190h1M327 190h1M339 190h1M350 190h1M370 190h1M376 190h1M398 190h1M407 190h1M421 190h1M425 190h1M434 190h1M469 190h1M479 190h1M482 190h1M485 190h1M495 190h1M496 190h1M510 190h1M519 190h1M522 190h1M533 190h1M538 190h1M541 190h1M559 190h1M563 190h1M567 190h1M593 190h1M604 190h1M614 190h1M26 191h1M33 191h1M39 191h1M44 191h1M48 191h1M63 191h1M75 191h1M76 191h1M90 191h1M107 191h1M118 191h1M120 191h1M121 191h1M122 191h1M131 191h1M141 191h1M143 191h1M145 191h1M148 191h1M151 191h1M155 191h1M157 191h1M159 191h1M163 191h1M169 191h1M179 191h1M194 191h1M195 191h1M197 191h1M198 191h1M216 191h1M223 191h1M225 191h1M234 191h1M242 191h1M243 191h1M249 191h1M266 191h1M272 191h1M273 191h1M278 191h1M291 191h1M296 191h1M313 191h1M314 191h1M320 191h1M326 191h1M330 191h1M346 191h1M347 191h1M354 191h1M376 191h1M382 191h1M385 191h1M390 191h1M392 191h1M393 191h1M406 191h1M408 191h1M410 191h1M413 191h1M419 191h1M435 191h1M444 191h1M449 191h1M451 191h1M474 191h1M480 191h1M484 191h1M495 191h1M497 191h1M500 191h1M505 191h1M506 191h1M509 191h1M520 191h1M536 191h1M541 191h1M552 191h1M559 191h1M560 191h1M562 191h1M573 191h1M581 191h1M584 191h1M589 191h1M592 191h1M604 191h1M610 191h1M34 192h1M35 192h1M36 192h1M38 192h1M49 192h1M70 192h1M96 192h1M110 192h1M117 192h1M118 192h1M132 192h1M136 192h1M139 192h1M143 192h1M153 192h1M165 192h1M175 192h1M177 192h1M179 192h1M184 192h1M188 192h1M215 192h1M230 192h1M233 192h1M242 192h1M247 192h1M249 192h1M252 192h1M253 192h1M272 192h1M276 192h1M284 192h1M285 192h1M289 192h1M304 192h1M317 192h1M323 192h1M338 192h1M352 192h1M353 192h1M359 192h1M365 192h1M378 192h1M381 192h1M403 192h1M412 192h1M423 192h1M429 192h1M435 192h1M444 192h1M445 192h1M456 192h1M459 192h1M460 192h1M467 192h1M468 192h1M473 192h1M481 192h1M490 192h1M505 192h1M506 192h1M513 192h1M515 192h1M517 192h1M518 192h1M528 192h1M535 192h1M539 192h1M544 192h1M545 192h1M559 192h1M563 192h1M565 192h1M575 192h1M591 192h1M592 192h1M596 192h1M608 192h1M610 192h1M613 192h1M30 193h1M37 193h1M38 193h1M40 193h1M42 193h1M44 193h1M56 193h1M66 193h1M76 193h1M77 193h1M80 193h1M98 193h1M105 193h1M108 193h1M111 193h1M127 193h1M133 193h1M140 193h1M146 193h1M149 193h1M151 193h1M158 193h1M176 193h1M179 193h1M182 193h1M193 193h1M195 193h1M199 193h1M218 193h1M221 193h1M229 193h1M231 193h1M237 193h1M260 193h1M265 193h1M269 193h1M274 193h1M277 193h1M281 193h1M288 193h1M313 193h1M321 193h1M325 193h1M329 193h1M343 193h1M345 193h1M355 193h1M369 193h1M372 193h1M383 193h1M389 193h1M396 193h1M397 193h1M421 193h1M432 193h1M438 193h1M471 193h1M475 193h1M476 193h1M484 193h1M496 193h1M517 193h1M519 193h1M530 193h1M542 193h1M561 193h1M570 193h1M574 193h1M603 193h1M611 193h1M20 194h1M21 194h1M23 194h1M38 194h1M50 194h1M52 194h1M72 194h1M73 194h1M80 194h1M83 194h1M84 194h1M87 194h1M101 194h1M112 194h1M118 194h1M120 194h1M132 194h1M142 194h1M157 194h1M162 194h1M168 194h1M169 194h1M174 194h1M176 194h1M179 194h1M184 194h1M185 194h1M192 194h1M201 194h1M214 194h1M215 194h1M233 194h1M239 194h1M249 194h1M261 194h1M276 194h1M283 194h1M292 194h1M299 194h1M313 194h1M317 194h1M321 194h1M323 194h1M325 194h1M334 194h1M335 194h1M365 194h1M366 194h1M368 194h1M378 194h1M382 194h1M384 194h1M386 194h1M423 194h1M427 194h1M431 194h1M433 194h1M442 194h1M444 194h1M454 194h1M489 194h1M494 194h1M495 194h1M500 194h1M503 194h1M507 194h1M508 194h1M514 194h1M516 194h1M525 194h1M528 194h1M543 194h1M551 194h1M555 194h1M556 194h1M557 194h1M559 194h1M564 194h1M579 194h1M595 194h1M611 194h1M23 195h1M34 195h1M35 195h1M39 195h1M57 195h1M74 195h1M78 195h1M79 195h1M82 195h1M84 195h1M94 195h1M114 195h1M121 195h1M126 195h1M133 195h1M135 195h1M141 195h1M142 195h1M147 195h1M148 195h1M168 195h1M181 195h1M192 195h1M213 195h1M225 195h1M227 195h1M233 195h1M234 195h1M246 195h1M251 195h1M253 195h1M254 195h1M260 195h1M278 195h1M280 195h1M285 195h1M286 195h1M308 195h1M316 195h1M329 195h1M330 195h1M334 195h1M335 195h1M348 195h1M350 195h1M354 195h1M365 195h1M370 195h1M371 195h1M375 195h1M378 195h1M381 195h1M387 195h1M389 195h1M392 195h1M399 195h1M402 195h1M409 195h1M428 195h1M430 195h1M433 195h1M434 195h1M446 195h1M447 195h1M451 195h1M455 195h1M461 195h1M464 195h1M470 195h1M491 195h1M493 195h1M501 195h1M503 195h1M526 195h1M528 195h1M530 195h1M536 195h1M547 195h1M549 195h1M555 195h1M557 195h1M563 195h1M574 195h1M590 195h1M594 195h1M599 195h1M601 195h1M609 195h1M610 195h1M21 196h1M38 196h1M53 196h1M57 196h1M68 196h1M69 196h1M73 196h1M110 196h1M112 196h1M120 196h1M125 196h1M127 196h1M133 196h1M135 196h1M137 196h1M150 196h1M154 196h1M155 196h1M162 196h1M168 196h1M169 196h1M175 196h1M181 196h1M184 196h1M192 196h1M223 196h1M239 196h1M248 196h1M257 196h1M259 196h1M262 196h1M268 196h1M277 196h1M278 196h1M283 196h1M299 196h1M301 196h1M313 196h1M321 196h1M322 196h1M325 196h1M333 196h1M343 196h1M349 196h1M351 196h1M352 196h1M361 196h1M375 196h1M379 196h1M385 196h1M391 196h1M395 196h1M399 196h1M404 196h1M415 196h1M427 196h1M440 196h1M451 196h1M458 196h1M475 196h1M491 196h1M493 196h1M517 196h1M521 196h1M531 196h1M542 196h1M545 196h1M552 196h1M553 196h1M554 196h1M562 196h1M570 196h1M582 196h1M583 196h1M601 196h1M607 196h1M613 196h1M617 196h1M34 197h1M37 197h1M67 197h1M70 197h1M80 197h1M88 197h1M110 197h1M117 197h1M119 197h1M129 197h1M153 197h1M157 197h1M159 197h1M163 197h1M175 197h1M195 197h1M208 197h1M219 197h1M241 197h1M245 197h1M249 197h1M254 197h1M258 197h1M264 197h1M266 197h1M284 197h1M295 197h1M308 197h1M319 197h1M326 197h1M336 197h1M346 197h1M353 197h1M359 197h1M369 197h1M370 197h1M371 197h1M372 197h1M381 197h1M387 197h1M400 197h1M401 197h1M402 197h1M427 197h1M430 197h1M435 197h1M452 197h1M456 197h1M465 197h1M471 197h1M472 197h1M484 197h1M487 197h1M502 197h1M512 197h1M520 197h1M540 197h1M562 197h1M567 197h1M570 197h1M573 197h1M583 197h1M590 197h1M598 197h1M603 197h1M616 197h1M618 197h1M30 198h1M32 198h1M62 198h1M87 198h1M91 198h1M99 198h1M105 198h1M122 198h1M125 198h1M127 198h1M139 198h1M148 198h1M151 198h1M157 198h1M161 198h1M168 198h1M173 198h1M175 198h1M188 198h1M189 198h1M204 198h1M205 198h1M207 198h1M211 198h1M212 198h1M231 198h1M247 198h1M248 198h1M254 198h1M265 198h1M267 198h1M268 198h1M290 198h1M300 198h1M305 198h1M309 198h1M314 198h1M342 198h1M344 198h1M349 198h1M351 198h1M366 198h1M381 198h1M382 198h1M384 198h1M400 198h1M408 198h1M410 198h1M417 198h1M422 198h1M433 198h1M444 198h1M449 198h1M451 198h1M452 198h1M455 198h1M457 198h1M463 198h1M474 198h1M482 198h1M484 198h1M495 198h1M496 198h1M506 198h1M515 198h1M519 198h1M526 198h1M530 198h1M539 198h1M545 198h1M550 198h1M556 198h1M560 198h1M579 198h1M581 198h1M590 198h1M593 198h1M29 199h1M30 199h1M39 199h1M42 199h1M45 199h1M46 199h1M48 199h1M49 199h1M55 199h1M60 199h1M72 199h1M73 199h1M88 199h1M90 199h1M92 199h1M93 199h1M98 199h1M108 199h1M111 199h1M112 199h1M113 199h1M114 199h1M130 199h1M132 199h1M142 199h1M143 199h1M163 199h1M165 199h1M167 199h1M183 199h1M209 199h1M214 199h1M217 199h1M224 199h1M226 199h1M227 199h1M233 199h1M235 199h1M238 199h1M242 199h1M246 199h1M257 199h1M264 199h1M269 199h1M292 199h1M299 199h1M306 199h1M308 199h1M311 199h1M320 199h1M327 199h1M332 199h1M341 199h1M350 199h1M360 199h1M364 199h1M366 199h1M367 199h1M369 199h1M374 199h1M383 199h1M396 199h1M430 199h1M433 199h1M441 199h1M460 199h1M467 199h1M468 199h1M477 199h1M486 199h1M489 199h1M492 199h1M504 199h1M508 199h1M517 199h1M522 199h1M523 199h1M552 199h1M557 199h1M563 199h1M566 199h1M567 199h1M572 199h1M573 199h1M577 199h1M600 199h1M607 199h1M619 199h1M22 200h1M31 200h1M39 200h1M79 200h1M107 200h1M113 200h1M121 200h1M128 200h1M135 200h1M138 200h1M144 200h1M148 200h1M152 200h1M171 200h1M193 200h1M197 200h1M214 200h1M221 200h1M225 200h1M233 200h1M239 200h1M244 200h1M256 200h1M260 200h1M264 200h1M265 200h1M286 200h1M325 200h1M328 200h1M329 200h1M331 200h1M333 200h1M336 200h1M341 200h1M348 200h1M349 200h1M363 200h1M366 200h1M383 200h1M385 200h1M403 200h1M406 200h1M407 200h1M430 200h1M445 200h1M502 200h1M514 200h1M517 200h1M518 200h1M524 200h1M538 200h1M550 200h1M575 200h1M580 200h1M586 200h1M598 200h1M600 200h1M607 200h1M611 200h1M35 201h1M36 201h1M47 201h1M63 201h1M64 201h1M67 201h1M72 201h1M75 201h1M85 201h1M88 201h1M99 201h1M149 201h1M166 201h1M172 201h1M178 201h1M192 201h1M202 201h1M213 201h1M229 201h1M230 201h1M232 201h1M244 201h1M277 201h1M279 201h1M295 201h1M298 201h1M322 201h1M324 201h1M325 201h1M333 201h1M342 201h1M352 201h1M353 201h1M363 201h1M364 201h1M373 201h1M402 201h1M406 201h1M412 201h1M470 201h1M472 201h1M476 201h1M497 201h1M501 201h1M507 201h1M515 201h1M521 201h1M526 201h1M528 201h1M530 201h1M537 201h1M542 201h1M553 201h1M554 201h1M558 201h1M566 201h1M577 201h1M586 201h1M590 201h1M597 201h1M599 201h1M610 201h1M616 201h1M23 202h1M27 202h1M30 202h1M47 202h1M62 202h1M66 202h1M70 202h1M73 202h1M74 202h1M79 202h1M85 202h1M104 202h1M110 202h1M113 202h1M115 202h1M135 202h1M147 202h1M156 202h1M164 202h1M169 202h1M187 202h1M210 202h1M215 202h1M217 202h1M231 202h1M233 202h1M244 202h1M250 202h1M252 202h1M273 202h1M280 202h1M293 202h1M309 202h1M325 202h1M326 202h1M332 202h1M335 202h1M336 202h1M355 202h1M357 202h1M358 202h1M360 202h1M365 202h1M382 202h1M384 202h1M409 202h1M411 202h1M417 202h1M436 202h1M443 202h1M451 202h1M476 202h1M507 202h1M512 202h1M513 202h1M516 202h1M520 202h1M563 202h1M569 202h1M571 202h1M576 202h1M584 202h1M601 202h1M615 202h1M32 203h1M38 203h1M47 203h1M81 203h1M133 203h1M141 203h1M145 203h1M173 203h1M197 203h1M203 203h1M204 203h1M211 203h1M244 203h1M245 203h1M254 203h1M265 203h1M269 203h1M272 203h1M276 203h1M292 203h1M306 203h1M324 203h1M332 203h1M349 203h1M394 203h1M399 203h1M418 203h1M419 203h1M426 203h1M427 203h1M454 203h1M468 203h1M480 203h1M482 203h1M505 203h1M535 203h1M539 203h1M548 203h1M555 203h1M560 203h1M579 203h1M583 203h1M584 203h1M601 203h1M612 203h1M615 203h1M616 203h1M47 204h1M68 204h1M81 204h1M84 204h1M94 204h1M95 204h1M108 204h1M112 204h1M118 204h1M137 204h1M148 204h1M172 204h1M179 204h1M195 204h1M207 204h1M223 204h1M230 204h1M231 204h1M258 204h1M271 204h1M274 204h1M318 204h1M320 204h1M334 204h1M364 204h1M380 204h1M393 204h1M405 204h1M456 204h1M478 204h1M482 204h1M483 204h1M493 204h1M507 204h1M524 204h1M525 204h1M538 204h1M557 204h1M566 204h1M578 204h1M581 204h1M584 204h1M587 204h1M589 204h1M590 204h1M592 204h1M599 204h1M603 204h1M613 204h1"/>
<path stroke="#0000ac" d="M128 183h1M20 187h1M306 187h1M601 187h1M193 188h1M216 188h1M346 188h1M464 188h1M588 188h1M128 189h1M321 189h1M331 189h1M377 189h1M434 189h1M563 189h1M24 190h1M92 190h1M168 190h1M189 190h1M205 190h1M290 190h1M314 190h1M446 190h1M468 190h1M473 190h1M524 190h1M589 190h1M55 191h1M84 191h1M265 191h1M308 191h1M315 191h1M323 191h1M344 191h1M380 191h1M384 191h1M403 191h1M486 191h1M607 191h1M40 192h1M87 192h1M202 192h1M298 192h1M496 192h1M62 193h1M113 193h1M137 193h1M141 193h1M212 193h1M285 193h1M292 193h1M311 193h1M322 193h1M333 193h1M419 193h1M437 193h1M458 193h1M547 193h1M575 193h1M577 193h1M583 193h1M588 193h1M604 193h1M59 194h1M114 194h1M151 194h1M206 194h1M216 194h1M272 194h1M277 194h1M329 194h1M359 194h1M403 194h1M410 194h1M434 194h1M453 194h1M485 194h1M513 194h1M529 194h1M548 194h1M582 194h1M596 194h1M609 194h1M616 194h1M59 195h1M95 195h1M194 195h1M265 195h1M328 195h1M388 195h1M410 195h1M476 195h1M477 195h1M546 195h1M552 195h1M560 195h1M52 196h1M83 196h1M100 196h1M102 196h1M116 196h1M152 196h1M304 196h1M317 196h1M360 196h1M369 196h1M370 196h1M471 196h1M510 196h1M527 196h1M580 196h1M616 196h1M31 197h1M96 197h1M126 197h1M185 197h1M211 197h1M223 197h1M239 197h1M293 197h1M311 197h1M395 197h1M408 197h1M536 197h1M611 197h1M20 198h1M180 198h1M238 198h1M258 198h1M307 198h1M319 198h1M363 198h1M413 198h1M187 199h1M213 199h1M229 199h1M237 199h1M248 199h1M397 199h1M421 199h1M431 199h1M535 199h1M580 199h1M614 199h1M115 200h1M137 200h1M164 200h1M254 200h1M285 200h1M296 200h1M327 200h1M345 200h1M350 200h1M373 200h1M437 200h1M440 200h1M478 200h1M527 200h1M551 200h1M569 200h1M573 200h1M587 200h1M605 200h1M65 201h1M74 201h1M113 201h1M176 201h1M268 201h1M269 201h1M339 201h1M345 201h1M426 201h1M436 201h1M445 201h1M496 201h1M582 201h1M67 202h1M124 202h1M176 202h1M203 202h1M256 202h1M390 202h1M414 202h1M442 202h1M457 202h1M503 202h1M525 202h1M558 202h1M561 202h1M572 202h1M618 202h1M65 203h1M225 203h1M249 203h1M305 203h1M438 203h1M498 203h1M511 203h1M540 203h1M76 204h1M80 204h1M96 204h1M160 204h1M202 204h1M314 204h1M375 204h1"/>
<path stroke="#00007c" d="M488 183h1M63 185h1M196 185h1M106 186h1M27 187h1M169 187h1M259 187h1M289 187h1M364 187h1M407 187h1M583 187h1M82 188h1M93 188h1M95 188h1M187 188h1M245 188h1M296 188h1M344 188h1M396 188h1M446 188h1M485 188h1M539 188h1M543 188h1M66 189h1M152 189h1M203 189h1M245 189h1M257 189h1M303 189h1M306 189h1M310 189h1M329 189h1M405 189h1M458 189h1M478 189h1M507 189h1M510 189h1M511 189h1M519 189h1M525 189h1M527 189h1M545 189h1M557 189h1M562 189h1M581 189h1M588 189h1M595 189h1M605 189h1M42 190h1M48 190h1M83 190h1M90 190h1M150 190h1M163 190h1M197 190h1M229 190h1M268 190h1M289 190h1M298 190h1M323 190h1M362 190h1M369 190h1M388 190h1M389 190h1M397 190h1M441 190h1M451 190h1M467 190h1M488 190h1M539 190h1M547 190h1M556 190h1M560 190h1M571 190h1M21 191h1M22 191h1M29 191h1M30 191h1M68 191h1M70 191h1M74 191h1M98 191h1M103 191h1M111 191h1M117 191h1M125 191h1M137 191h1M154 191h1M164 191h1M167 191h1M187 191h1M190 191h1M209 191h1M228 191h1M245 191h1M254 191h1M259 191h1M289 191h1M292 191h1M312 191h1M331 191h1M357 191h1M368 191h1M378 191h1M394 191h1M396 191h1M401 191h1M426 191h1M441 191h1M454 191h1M487 191h1M491 191h1M501 191h1M531 191h1M564 191h1M586 191h1M587 191h1M602 191h1M618 191h1M41 192h1M55 192h1M67 192h1M75 192h1M103 192h1M121 192h1M133 192h1M134 192h1M141 192h1M150 192h1M152 192h1M168 192h1M189 192h1M195 192h1M201 192h1M220 192h1M231 192h1M261 192h1M265 192h1M268 192h1M293 192h1M297 192h1M308 192h1M334 192h1M347 192h1M354 192h1M363 192h1M367 192h1M368 192h1M373 192h1M375 192h1M387 192h1M397 192h1M414 192h1M447 192h1M448 192h1M450 192h1M469 192h1M474 192h1M491 192h1M526 192h1M532 192h1M554 192h1M558 192h1M573 192h1M574 192h1M584 192h1M585 192h1M588 192h1M597 192h1M603 192h1M612 192h1M616 192h1M22 193h1M25 193h1M57 193h1M75 193h1M79 193h1M124 193h1M143 193h1M154 193h1M170 193h1M177 193h1M196 193h1M215 193h1M227 193h1M255 193h1M258 193h1M262 193h1M263 193h1M271 193h1M287 193h1M290 193h1M307 193h1M351 193h1M367 193h1M375 193h1M376 193h1M409 193h1M420 193h1M424 193h1M440 193h1M461 193h1M463 193h1M473 193h1M487 193h1M497 193h1M508 193h1M523 193h1M527 193h1M535 193h1M544 193h1M555 193h1M587 193h1M607 193h1M615 193h1M617 193h1M79 194h1M85 194h1M89 194h1M90 194h1M123 194h1M130 194h1M135 194h1M137 194h1M143 194h1M146 194h1M158 194h1M163 194h1M180 194h1M193 194h1M200 194h1M210 194h1M222 194h1M241 194h1M262 194h1M264 194h1M270 194h1M271 194h1M304 194h1M309 194h1M330 194h1M340 194h1M343 194h1M345 194h1M362 194h1M391 194h1M400 194h1M429 194h1M449 194h1M450 194h1M452 194h1M460 194h1M474 194h1M538 194h1M549 194h1M566 194h1M568 194h1M570 194h1M577 194h1M581 194h1M583 194h1M584 194h1M588 194h1M604 194h1M605 194h1M614 194h1M619 194h1M27 195h1M45 195h1M47 195h1M49 195h1M53 195h1M54 195h1M58 195h1M83 195h1M87 195h1M92 195h1M132 195h1M136 195h1M152 195h1M155 195h1M179 195h1M189 195h1M195 195h1M196 195h1M208 195h1M215 195h1M223 195h1M270 195h1M275 195h1M283 195h1M284 195h1M290 195h1M294 195h1M312 195h1M332 195h1M339 195h1M346 195h1M373 195h1M411 195h1M432 195h1M453 195h1M462 195h1M468 195h1M482 195h1M508 195h1M509 195h1M514 195h1M520 195h1M565 195h1M576 195h1M587 195h1M589 195h1M595 195h1M598 195h1M32 196h1M33 196h1M35 196h1M63 196h1M91 196h1M95 196h1M104 196h1M107 196h1M113 196h1M129 196h1M131 196h1M142 196h1M153 196h1M178 196h1M191 196h1M211 196h1M214 196h1M218 196h1M225 196h1M237 196h1M263 196h1M273 196h1M280 196h1M298 196h1M308 196h1M318 196h1M323 196h1M329 196h1M331 196h1M344 196h1M373 196h1M418 196h1M469 196h1M478 196h1M492 196h1M496 196h1M547 196h1M556 196h1M566 196h1M568 196h1M574 196h1M593 196h1M39 197h1M41 197h1M42 197h1M49 197h1M53 197h1M62 197h1M85 197h1M133 197h1M138 197h1M142 197h1M145 197h1M147 197h1M169 197h1M187 197h1M206 197h1M215 197h1M224 197h1M232 197h1M244 197h1M260 197h1M268 197h1M278 197h1M301 197h1M314 197h1M339 197h1M373 197h1M378 197h1M384 197h1M415 197h1M418 197h1M428 197h1M434 197h1M439 197h1M443 197h1M454 197h1M467 197h1M475 197h1M490 197h1M491 197h1M534 197h1M537 197h1M564 197h1M566 197h1M572 197h1M586 197h1M592 197h1M599 197h1M604 197h1M608 197h1M617 197h1M619 197h1M31 198h1M70 198h1M90 198h1M92 198h1M98 198h1M130 198h1M132 198h1M183 198h1M208 198h1M213 198h1M250 198h1M270 198h1M287 198h1M325 198h1M340 198h1M345 198h1M376 198h1M377 198h1M392 198h1M396 198h1M402 198h1M426 198h1M445 198h1M459 198h1M466 198h1M475 198h1M487 198h1M514 198h1M532 198h1M544 198h1M546 198h1M554 198h1M566 198h1M616 198h1M26 199h1M40 199h1M44 199h1M50 199h1M57 199h1M75 199h1M85 199h1M86 199h1M95 199h1M103 199h1M104 199h1M106 199h1M117 199h1M129 199h1M147 199h1M149 199h1M152 199h1M159 199h1M180 199h1M193 199h1M206 199h1M208 199h1M212 199h1M215 199h1M232 199h1M251 199h1M252 199h1M266 199h1M274 199h1M282 199h1M297 199h1M310 199h1M315 199h1M340 199h1M394 199h1M398 199h1M404 199h1M407 199h1M411 199h1M420 199h1M440 199h1M442 199h1M451 199h1M464 199h1M482 199h1M493 199h1M507 199h1M520 199h1M538 199h1M546 199h1M578 199h1M582 199h1M586 199h1M588 199h1M592 199h1M595 199h1M599 199h1M608 199h1M615 199h1M27 200h1M52 200h1M63 200h1M77 200h1M94 200h1M133 200h1M154 200h1M163 200h1M219 200h1M247 200h1M250 200h1M270 200h1M281 200h1M282 200h1M294 200h1M304 200h1M305 200h1M310 200h1M342 200h1M347 200h1M357 200h1M370 200h1M392 200h1M409 200h1M414 200h1M423 200h1M434 200h1M435 200h1M439 200h1M467 200h1M479 200h1M486 200h1M493 200h1M519 200h1M522 200h1M540 200h1M544 200h1M555 200h1M560 200h1M568 200h1M582 200h1M593 200h1M606 200h1M610 200h1M31 201h1M33 201h1M43 201h1M51 201h1M56 201h1M57 201h1M60 201h1M87 201h1M89 201h1M102 201h1M107 201h1M125 201h1M127 201h1M148 201h1M154 201h1M155 201h1M169 201h1M179 201h1M190 201h1M193 201h1M199 201h1M228 201h1M246 201h1M262 201h1M266 201h1M272 201h1M275 201h1M302 201h1M320 201h1M323 201h1M332 201h1M337 201h1M358 201h1M362 201h1M392 201h1M404 201h1M411 201h1M413 201h1M420 201h1M422 201h1M423 201h1M425 201h1M481 201h1M510 201h1M524 201h1M550 201h1M567 201h1M570 201h1M575 201h1M587 201h1M591 201h1M594 201h1M602 201h1M606 201h1M33 202h1M68 202h1M81 202h1M82 202h1M96 202h1M105 202h1M108 202h1M125 202h1M130 202h1M131 202h1M133 202h1M166 202h1M172 202h1M174 202h1M177 202h1M195 202h1M219 202h1M222 202h1M224 202h1M238 202h1M262 202h1M268 202h1M272 202h1M294 202h1M318 202h1M329 202h1M363 202h1M367 202h1M368 202h1M377 202h1M398 202h1M403 202h1M404 202h1M426 202h1M428 202h1M433 202h1M434 202h1M437 202h1M455 202h1M459 202h1M482 202h1M506 202h1M508 202h1M551 202h1M556 202h1M577 202h1M593 202h1M21 203h1M46 203h1M95 203h1M131 203h1M144 203h1M153 203h1M192 203h1M237 203h1M250 203h1M284 203h1M299 203h1M323 203h1M342 203h1M356 203h1M359 203h1M361 203h1M408 203h1M412 203h1M428 203h1M458 203h1M464 203h1M490 203h1M514 203h1M551 203h1M558 203h1M570 203h1M582 203h1M585 203h1M586 203h1M600 203h1M618 203h1M28 204h1M29 204h1M42 204h1M100 204h1M106 204h1M126 204h1M141 204h1M152 204h1M163 204h1M197 204h1M208 204h1M222 204h1M228 204h1M248 204h1M270 204h1M312 204h1M335 204h1M346 204h1M377 204h1M386 204h1M425 204h1M437 204h1M439 204h1M444 204h1M455 204h1M495 204h1M506 204h1M547 204h1M577 204h1M586 204h1M597 204h1M619 204h1"/>
<path stroke="#0008f0" d="M619 187h1M519 188h1M607 188h1M175 189h1M227 190h1M239 190h1M466 190h1M28 191h1M152 191h1M371 191h1M437 191h1M467 191h1M485 191h1M502 191h1M114 192h1M464 192h1M541 192h1M605 192h1M335 193h1M69 195h1M80 195h1M118 195h1M306 195h1M400 195h1M388 196h1M454 196h1M589 196h1M614 197h1M329 198h1M464 198h1M585 198h1M391 199h1M414 199h1M391 200h1M41 202h1M127 202h1M183 202h1M486 202h1M88 203h1M317 203h1M493 203h1M89 204h1M295 204h1"/>
<path stroke="#000046" d="M23 205h1M29 205h1M30 205h1M36 205h1M43 205h1M49 205h1M66 205h1M70 205h1M83 205h1M90 205h1M93 205h1M102 205h1M118 205h1M143 205h1M146 205h1M151 205h1M185 205h1M265 205h1M273 205h1M281 205h1M306 205h1M359 205h1M365 205h1M367 205h1M372 205h1M384 205h1M392 205h1M399 205h1M409 205h1M412 205h1M471 205h1M486 205h1M511 205h1M517 205h1M520 205h1M531 205h1M564 205h1M572 205h1M581 205h1M588 205h1M610 205h1M618 205h1M33 206h1M69 206h1M129 206h1M150 206h1M158 206h1M180 206h1M193 206h1M197 206h1M201 206h1M202 206h1M207 206h1M224 206h1M261 206h1M269 206h1M282 206h1M288 206h1M308 206h1M311 206h1M331 206h1M343 206h1M349 206h1M351 206h1M361 206h1M391 206h1M399 206h1M422 206h1M425 206h1M470 206h1M495 206h1M520 206h1M529 206h1M536 206h1M542 206h1M543 206h1M559 206h1M603 206h1M604 206h1M20 207h1M32 207h1M41 207h1M113 207h1M133 207h1M161 207h1M169 207h1M176 207h1M194 207h1M211 207h1M238 207h1M245 207h1M255 207h1M289 207h1M296 207h1M297 207h1M346 207h1M352 207h1M354 207h1M356 207h1M368 207h1M375 207h1M392 207h1M441 207h1M474 207h1M479 207h1M540 207h1M556 207h1M561 207h1M569 207h1M575 207h1M580 207h1M585 207h1M610 207h1M613 207h1M615 207h1M618 207h1M21 208h1M65 208h1M90 208h1M95 208h1M211 208h1M212 208h1M224 208h1M232 208h1M238 208h1M274 208h1M295 208h1M305 208h1M306 208h1M311 208h1M324 208h1M326 208h1M333 208h1M338 208h1M350 208h1M375 208h1M398 208h1M452 208h1M459 208h1M474 208h1M477 208h1M482 208h1M502 208h1M512 208h1M545 208h1M554 208h1M563 208h1M576 208h1M582 208h1M602 208h1M614 208h1M82 209h1M127 209h1M165 209h1M225 209h1M229 209h1M252 209h1M258 209h1M261 209h1M265 209h1M297 209h1M341 209h1M345 209h1M387 209h1M394 209h1M398 209h1M402 209h1M451 209h1M455 209h1M456 209h1M459 209h1M515 209h1M534 209h1M580 209h1M583 209h1M589 209h1M601 209h1M615 209h1M53 210h1M70 210h1M87 210h1M98 210h1M110 210h1M146 210h1M206 210h1M219 210h1M253 210h1M255 210h1M277 210h1M304 210h1M329 210h1M340 210h1M350 210h1M369 210h1M375 210h1M461 210h1M470 210h1M487 210h1M491 210h1M493 210h1M498 210h1M508 210h1M534 210h1M542 210h1M592 210h1M618 210h1M49 211h1M71 211h1M102 211h1M130 211h1M153 211h1M175 211h1M177 211h1M253 211h1M255 211h1M288 211h1M292 211h1M312 211h1M313 211h1M337 211h1M346 211h1M352 211h1M353 211h1M360 211h1M378 211h1M398 211h1M415 211h1M442 211h1M539 211h1M552 211h1M558 211h1M607 211h1M40 212h1M94 212h1M103 212h1M121 212h1M141 212h1M154 212h1M165 212h1M188 212h1M226 212h1M250 212h1M326 212h1M335 212h1M372 212h1M385 212h1M426 212h1M448 212h1M465 212h1M515 212h1M543 212h1M566 212h1M597 212h1M602 212h1M612 212h1M103 213h1M167 213h1M213 213h1M268 213h1M270 213h1M278 213h1M291 213h1M322 213h1M376 213h1M413 213h1M489 213h1M516 213h1M517 213h1M528 213h1M537 213h1M543 213h1M546 213h1M588 213h1M595 213h1M605 213h1M607 213h1M612 213h1M27 214h1M92 214h1M197 214h1M272 214h1M274 214h1M288 214h1M295 214h1M303 214h1M380 214h1M418 214h1M432 214h1M462 214h1M497 214h1M499 214h1M542 214h1M546 214h1M576 214h1M608 214h1M612 214h1M43 215h1M60 215h1M61 215h1M82 215h1M99 215h1M108 215h1M132 215h1M140 215h1M141 215h1M160 215h1M199 215h1M206 215h1M222 215h1M235 215h1M315 215h1M320 215h1M364 215h1M414 215h1M436 215h1M462 215h1M492 215h1M517 215h1M577 215h1M617 215h1M52 216h1M66 216h1M101 216h1M149 216h1M167 216h1M184 216h1M196 216h1M242 216h1M277 216h1M373 216h1M440 216h1M450 216h1M452 216h1M534 216h1M552 216h1M571 216h1M614 216h1M619 216h1M52 217h1M64 217h1M74 217h1M91 217h1M133 217h1M200 217h1M209 217h1M218 217h1M261 217h1M270 217h1M295 217h1M303 217h1M318 217h1M344 217h1M411 217h1M423 217h1M465 217h1M469 217h1M552 217h1M603 217h1M65 218h1M112 218h1M167 218h1M178 218h1M210 218h1M264 218h1M336 218h1M383 218h1M468 218h1M485 218h1M526 218h1M536 218h1M603 218h1M69 219h1M75 219h1M78 219h1M89 219h1M156 219h1M173 219h1M179 219h1M188 219h1M205 219h1M208 219h1M240 219h1M360 219h1M370 219h1M383 219h1M405 219h1M435 219h1M452 219h1M471 219h1M498 219h1M516 219h1M532 219h1M588 219h1M618 219h1M40 220h1M88 220h1M98 220h1M109 220h1M158 220h1M196 220h1M267 220h1M300 220h1M317 220h1M318 220h1M385 220h1M508 220h1M575 220h1M86 221h1M147 221h1M189 221h1M198 221h1M205 221h1M212 221h1M221 221h1M226 221h1M246 221h1M249 221h1M388 221h1M456 221h1M493 221h1M518 221h1M549 221h1M28 222h1M35 222h1M62 222h1M67 222h1M71 222h1M137 222h1M183 222h1M187 222h1M285 222h1M324 222h1M389 222h1M471 222h1M488 222h1M517 222h1M529 222h1M569 222h1M578 222h1M592 222h1M33 223h1M46 223h1M51 223h1M56 223h1M183 223h1M220 223h1M270 223h1M296 223h1M312 223h1M334 223h1M401 223h1M406 223h1M424 223h1M432 223h1M443 223h1M473 223h1M578 223h1M596 223h1M43 224h1M47 224h1M54 224h1M92 224h1M243 224h1M302 224h1M310 224h1M341 224h1M344 224h1M380 224h1M423 224h1M460 224h1M513 224h1M543 224h1M572 224h1M583 224h1M51 225h1M79 225h1M157 225h1M161 225h1M177 225h1M240 225h1M290 225h1M324 225h1M393 225h1M395 225h1M412 225h1M612 225h1M61 226h1M76 226h1M177 226h1M199 226h1M222 226h1M247 226h1M273 226h1M276 226h1M334 226h1M356 226h1M433 226h1M467 226h1M530 226h1M612 226h1M34 227h1M39 227h1M196 227h1M252 227h1M253 227h1M306 227h1M308 227h1M385 227h1M417 227h1M488 227h1M533 227h1M599 227h1M51 228h1M81 228h1M94 228h1M122 228h1M135 228h1M149 228h1M187 228h1M292 228h1M397 228h1M408 228h1M545 228h1M553 228h1M582 228h1M57 229h1M63 229h1M206 229h1M259 229h1M264 229h1M286 229h1M378 229h1M450 229h1M471 229h1M523 229h1M237 230h1M352 230h1M434 230h1M491 230h1M20 231h1M84 231h1M138 231h1M193 231h1M221 231h1M350 231h1M358 231h1M391 231h1M401 231h1M566 231h1M205 232h1M575 232h1M583 232h1M603 232h1M27 233h1M122 233h1M127 233h1M191 233h1M201 233h1M209 233h1M288 233h1M331 233h1M339 233h1M386 233h1M402 233h1M475 233h1M563 233h1M74 234h1M169 234h1M285 234h1M289 234h1M331 234h1M436 234h1M452 234h1M459 234h1M533 234h1M534 234h1M580 234h1M582 234h1M597 234h1M52 235h1M57 235h1M62 235h1M554 235h1M95 236h1M130 236h1M170 236h1M248 236h1M398 236h1M551 236h1M598 236h1M604 236h1M57 237h1M273 237h1M294 237h1M393 237h1M525 237h1M602 237h1M290 238h1M318 238h1M356 238h1M373 238h1M392 238h1M490 238h1M498 238h1M560 238h1M168 239h1M213 239h1M275 239h1M286 239h1M312 239h1M404 239h1M516 239h1M530 239h1M73 240h1M92 240h1M101 240h1M115 240h1M308 240h1M392 240h1M533 240h1M152 241h1M175 241h1M206 241h1M276 241h1M442 241h1M511 241h1M44 242h1M53 242h1M80 242h1M242 242h1M248 242h1M406 242h1M424 242h1M451 242h1M21 243h1M147 243h1M174 243h1M246 243h1M310 243h1M402 243h1M421 243h1M560 243h1M63 244h1M129 244h1M188 244h1M239 244h1M256 244h1M290 244h1M331 244h1M372 244h1M395 244h1M447 244h1M468 244h1M23 245h1M52 245h1M66 245h1M71 245h1M73 245h1M79 245h1M112 245h1M200 245h1M254 245h1M280 245h1M92 246h1M418 246h1M583 246h1M614 246h1M114 247h1M125 247h1M150 247h1M432 247h1M493 247h1M580 247h1M586 247h1M43 248h1M69 248h1M214 248h1M242 248h1M256 248h1M260 248h1M547 248h1M549 248h1M579 248h1M320 249h1M357 249h1M446 249h1M64 250h1M100 250h1M335 250h1M357 250h1M398 250h1M587 250h1M44 251h1M84 251h1M269 251h1M371 251h1M420 251h1M549 251h1M28 252h1M109 252h1M115 252h1M179 252h1M221 252h1M246 252h1M392 252h1M490 252h1M542 252h1M553 252h1M82 253h1M94 253h1M220 253h1M235 253h1M273 253h1M330 253h1M389 253h1M417 253h1M479 253h1M595 253h1M43 254h1M46 254h1M160 254h1M199 254h1M215 254h1M248 254h1M324 254h1M359 254h1M585 254h1M259 255h1M184 256h1M357 256h1M373 256h1M385 256h1M440 256h1M520 256h1M410 257h1M435 257h1M468 257h1M25 258h1M90 258h1M259 258h1M391 258h1M483 258h1M551 258h1M203 259h1M232 259h1M271 259h1M399 259h1M483 259h1M517 259h1M600 259h1M85 260h1M238 260h1M447 260h1M606 260h1M268 261h1M284 261h1M299 261h1M355 261h1M427 261h1M56 262h1M100 262h1M189 262h1M540 262h1M57 263h1M64 263h1M138 263h1M226 263h1M423 263h1M92 264h1M138 264h1M143 264h1M168 264h1M224 264h1M299 264h1M322 264h1M368 264h1M400 264h1M424 264h1M536 264h1M341 265h1M369 265h1M551 265h1M558 265h1M601 265h1M44 267h1M78 267h1M215 267h1M352 267h1M431 267h1M127 268h1M427 268h1M517 268h1M407 270h1M444 271h1"/>
<path stroke="#00006a" d="M62 205h1M107 205h1M135 205h1M169 205h1M191 205h1M219 205h1M221 205h1M224 205h1M291 205h1M327 205h1M329 205h1M418 205h1M421 205h1M433 205h1M472 205h1M518 205h1M528 205h1M540 205h1M554 205h1M577 205h1M582 205h1M594 205h1M31 206h1M90 206h1M105 206h1M135 206h1M181 206h1M248 206h1M279 206h1M347 206h1M387 206h1M436 206h1M510 206h1M528 206h1M589 206h1M608 206h1M610 206h1M31 207h1M71 207h1M110 207h1M135 207h1M149 207h1M203 207h1M218 207h1M251 207h1M358 207h1M361 207h1M374 207h1M402 207h1M424 207h1M509 207h1M528 207h1M577 207h1M581 207h1M130 208h1M174 208h1M195 208h1M247 208h1M291 208h1M298 208h1M302 208h1M362 208h1M370 208h1M373 208h1M453 208h1M456 208h1M498 208h1M501 208h1M518 208h1M565 208h1M48 209h1M73 209h1M153 209h1M355 209h1M356 209h1M433 209h1M302 210h1M303 210h1M351 210h1M382 210h1M436 210h1M448 210h1M499 210h1M527 210h1M50 211h1M59 211h1M137 211h1M165 211h1M215 211h1M295 211h1M324 211h1M452 211h1M473 211h1M524 211h1M598 211h1M29 212h1M33 212h1M319 212h1M395 212h1M470 212h1M478 212h1M593 212h1M618 212h1M41 213h1M94 213h1M102 213h1M120 213h1M127 213h1M351 213h1M383 213h1M482 213h1M563 213h1M587 213h1M241 214h1M259 214h1M339 214h1M359 214h1M609 214h1M62 215h1M146 215h1M151 215h1M184 215h1M254 215h1M380 215h1M531 215h1M557 215h1M223 216h1M296 216h1M396 216h1M431 216h1M499 216h1M77 217h1M401 217h1M605 217h1M45 218h1M64 218h1M102 218h1M127 218h1M176 218h1M305 218h1M399 218h1M449 218h1M283 219h1M350 219h1M423 219h1M477 219h1M494 219h1M555 219h1M590 219h1M32 220h1M51 220h1M99 220h1M155 220h1M273 220h1M277 220h1M321 220h1M371 220h1M374 220h1M396 220h1M564 220h1M35 221h1M68 221h1M280 221h1M616 221h1M42 222h1M73 222h1M259 222h1M356 222h1M373 222h1M395 222h1M540 222h1M557 222h1M572 222h1M604 222h1M45 223h1M120 223h1M170 223h1M201 223h1M266 223h1M392 223h1M399 223h1M510 223h1M115 224h1M169 224h1M211 224h1M266 224h1M311 224h1M135 225h1M374 225h1M444 225h1M455 225h1M103 226h1M227 226h1M241 226h1M582 226h1M38 227h1M100 228h1M230 228h1M287 228h1M315 228h1M332 228h1M453 228h1M341 229h1M472 229h1M518 229h1M397 230h1M416 230h1M512 230h1M546 230h1M572 230h1M63 231h1M157 231h1M318 231h1M431 231h1M287 232h1M402 232h1M496 232h1M323 233h1M593 233h1M36 234h1M48 234h1M84 234h1M138 234h1M502 234h1M164 235h1M207 235h1M417 235h1M492 235h1M609 235h1M36 236h1M218 237h1M498 237h1M125 238h1M241 238h1M320 238h1M400 238h1M504 238h1M547 238h1M583 238h1M103 239h1M308 239h1M544 239h1M64 240h1M141 240h1M151 240h1M367 240h1M578 240h1M583 240h1M618 240h1M445 241h1M309 242h1M615 242h1M395 243h1M566 243h1M175 244h1M237 244h1M300 244h1M452 244h1M354 245h1M425 245h1M440 245h1M128 246h1M403 246h1M577 246h1M435 247h1M454 247h1M296 248h1M305 248h1M339 248h1M465 248h1M140 249h1M334 249h1M151 250h1M120 251h1M245 251h1M275 251h1M474 251h1M100 252h1M112 252h1M151 253h1M223 253h1M294 253h1M463 253h1M301 254h1M332 254h1M266 255h1M52 256h1M136 256h1M170 256h1M273 256h1M173 257h1M431 257h1M116 258h1M463 258h1M516 258h1M448 259h1M87 260h1M395 260h1M449 260h1M549 260h1M599 260h1M484 261h1M243 262h1M548 262h1M167 265h1M314 265h1M444 265h1M185 268h1M381 268h1"/>
<path stroke="#00a0ff" d="M60 197h1M261 211h1M102 212h1"/>
<path stroke="#0040ff" d="M180 209h1M167 214h1M463 214h1"/>
</g>
<rect x="19" y="181" width="1" height="100" fill="#888888"/>
<rect x="20" y="370" width="600" height="1" fill="#808080"/>
<rect x="20" y="380" width="600" height="1" fill="#808080"/>
<rect x="20" y="390" width="600" height="1" fill="#808080"/>
<g transform="translate(0.5,0)" stroke="#00ffff" stroke-width="1" fill="none"><path d="M20 400v-2M21 400v-2M22 400v-2M23 400v-2M24 400v-2M25 400v-2M26 400v-2M27 400v-1M28 400v-1M29 400v-1M30 400v-1M31 400v-6M33 400v-2M34 400v-2M35 400v-1M36 400v-2M37 400v-1M38 400v-1M39 400v-1M40 400v-1M41 400v-2M42 400v-1M43 400v-2M44 400v-1M45 400v-2M46 400v-1M47 400v-1M48 400v-1M49 400v-2M50 400v-1M51 400v-3M52 400v-1M53 400v-2M54 400v-2M56 400v-2M59 400v-2M60 400v-5M61 400v-1M62 400v-3M64 400v-1M65 400v-2M66 400v-2M67 400v-2M70 400v-2M71 400v-1M73 400v-5M74 400v-2M75 400v-1M76 400v-2M79 400v-1M81 400v-1M82 400v-2M83 400v-1M84 400v-2M85 400v-1M86 400v-4M87 400v-2M88 400v-3M89 400v-1M90 400v-1M92 400v-4M93 400v-2M95 400v-1M96 400v-1M97 400v-1M98 400v-4M99 400v-4M100 400v-1M101 400v-2M102 400v-7M103 400v-1M104 400v-1M105 400v-1M106 400v-1M107 400v-1M108 400v-1M110 400v-1M111 400v-2M112 400v-1M113 400v-2M114 400v-3M115 400v-2M116 400v-2M118 400v-1M120 400v-2M121 400v-1M125 400v-2M126 400v-4M129 400v-1M130 400v-1M131 400v-2M132 400v-1M133 400v-2M135 400v-1M138 400v-1M139 400v-1M140 400v-1M141 400v-3M142 400v-2M143 400v-5M144 400v-2M145 400v-1M146 400v-2M147 400v-3M148 400v-1M149 400v-2M150 400v-2M151 400v-2M152 400v-2M153 400v-3M154 400v-1M156 400v-1M157 400v-1M158 400v-2M160 400v-1M161 400v-1M162 400v-1M164 400v-2M165 400v-2M166 400v-1M167 400v-1M169 400v-4M170 400v-1M171 400v-2M172 400v-1M173 400v-3M174 400v-1M175 400v-1M176 400v-4M177 400v-1M178 400v-2M179 400v-1M180 400v-3M181 400v-1M182 400v-1M183 400v-4M184 400v-2M185 400v-4M186 400v-1M188 400v-1M189 400v-1M190 400v-1M191 400v-1M193 400v-1M194 400v-3M198 400v-1M199 400v-1M200 400v-2M201 400v-2M206 400v-1M208 400v-1M210 400v-2M211 400v-1M212 400v-1M213 400v-1M214 400v-1M215 400v-1M216 400v-2M218 400v-2M219 400v-1M221 400v-1M222 400v-1M223 400v-3M225 400v-4M226 400v-1M227 400v-2M228 400v-3M229 400v-1M230 400v-1M231 400v-1M232 400v-2M233 400v-1M236 400v-2M237 400v-1M238 400v-2M239 400v-1M241 400v-2M242 400v-1M244 400v-2M245 400v-2M247 400v-2M248 400v-1M249 400v-4M250 400v-1M251 400v-2M252 400v-1M253 400v-1M254 400v-1M255 400v-1M257 400v-2M258 400v-2M259 400v-1M260 400v-6M261 400v-1M262 400v-3M263 400v-3M265 400v-1M266 400v-2M267 400v-4M268 400v-2M269 400v-1M270 400v-1M271 400v-2M272 400v-1M274 400v-1M275 400v-2M277 400v-2M278 400v-4M279 400v-1M280 400v-1M281 400v-2M282 400v-1M283 400v-1M284 400v-1M285 400v-1M286 400v-1M288 400v-1M289 400v-1M290 400v-2M291 400v-1M293 400v-1M297 400v-2M299 400v-2M300 400v-2M301 400v-1M303 400v-2M304 400v-1M306 400v-1M308 400v-1M309 400v-1M312 400v-1M313 400v-1M314 400v-1M315 400v-2M316 400v-3M317 400v-4M318 400v-2M319 400v-1M320 400v-1M321 400v-1M323 400v-2M324 400v-2M326 400v-1M327 400v-1M328 400v-4M329 400v-2M330 400v-1M332 400v-1M333 400v-4M334 400v-2M335 400v-1M336 400v-2M337 400v-2M339 400v-1M342 400v-2M343 400v-4M345 400v-2M346 400v-1M348 400v-3M349 400v-5M351 400v-1M352 400v-1M353 400v-2M354 400v-4M355 400v-2M356 400v-1M357 400v-3M358 400v-3M359 400v-2M360 400v-2M362 400v-1M363 400v-3M366 400v-2M368 400v-2M369 400v-1M371 400v-1M372 400v-1M373 400v-1M374 400v-1M375 400v-1M379 400v-2M380 400v-2M381 400v-1M382 400v-1M383 400v-1M384 400v-2M385 400v-3M386 400v-1M387 400v-2M389 400v-6M392 400v-1M393 400v-3M394 400v-2M395 400v-1M397 400v-1M398 400v-1M399 400v-1M400 400v-3M401 400v-2M402 400v-2M403 400v-1M404 400v-2M405 400v-1M406 400v-4M408 400v-1M409 400v-2M410 400v-1M411 400v-1M412 400v-1M413 400v-1M414 400v-1M416 400v-1M418 400v-1M420 400v-3M422 400v-2M423 400v-1M424 400v-2M427 400v-2M428 400v-4M429 400v-1M430 400v-3M431 400v-1M432 400v-1M433 400v-1M434 400v-2M435 400v-2M436 400v-1M439 400v-1M441 400v-2M442 400v-1M443 400v-1M444 400v-1M446 400v-1M448 400v-2M449 400v-4M450 400v-1M451 400v-1M452 400v-1M454 400v-1M455 400v-2M456 400v-1M457 400v-1M458 400v-1M460 400v-2M462 400v-1M463 400v-1M464 400v-8M466 400v-1M467 400v-1M468 400v-2M469 400v-1M470 400v-4M471 400v-1M473 400v-1M474 400v-1M475 400v-1M476 400v-1M477 400v-1M479 400v-1M480 400v-2M482 400v-1M483 400v-1M484 400v-1M485 400v-1M488 400v-1M489 400v-2M490 400v-1M493 400v-1M494 400v-3M495 400v-1M496 400v-2M497 400v-3M498 400v-3M499 400v-1M500 400v-1M501 400v-1M503 400v-1M505 400v-1M506 400v-2M508 400v-2M510 400v-1M513 400v-1M514 400v-3M516 400v-2M517 400v-1M518 400v-2M519 400v-2M520 400v-3M521 400v-1M522 400v-3M523 400v-2M525 400v-2M526 400v-2M527 400v-2M528 400v-1M531 400v-2M532 400v-2M534 400v-1M536 400v-1M537 400v-1M538 400v-2M540 400v-1M541 400v-3M542 400v-1M545 400v-3M546 400v-1M547 400v-1M549 400v-2M550 400v-2M552 400v-2M553 400v-1M554 400v-1M555 400v-2M556 400v-1M557 400v-2M558 400v-1M560 400v-1M561 400v-2M563 400v-1M564 400v-3M565 400v-2M566 400v-1M567 400v-1M568 400v-3M569 400v-2M571 400v-2M572 400v-1M575 400v-1M576 400v-1M579 400v-2M581 400v-3M583 400v-1M584 400v-1M587 400v-4M589 400v-5M590 400v-2M591 400v-2M593 400v-1M594 400v-2M595 400v-1M596 400v-1M597 400v-1M598 400v-4M599 400v-2M600 400v-1M601 400v-1M602 400v-2M605 400v-1M606 400v-2M608 400v-3M609 400v-2M610 400v-1M613 400v-3M614 400v-3M615 400v-1M616 400v-2M617 400v-6M619 400v-1"/></g>
<g fill="#ffff00"><rect x="16" y="90" width="2" height="1"/><rect x="16" y="100" width="2" height="1"/><rect x="16" y="110" width="2" height="1"/><rect x="16" y="120" width="2" height="1"/><rect x="16" y="130" width="2" height="1"/><rect x="16" y="140" width="2" height="1"/><rect x="16" y="150" width="2" height="1"/><rect x="16" y="160" width="2" height="1"/><rect x="16" y="170" width="2" height="1"/><rect x="16" y="180" width="2" height="1"/><rect x="16" y="190" width="2" height="1"/><rect x="16" y="200" width="2" height="1"/><rect x="16" y="210" width="2" height="1"/><rect x="16" y="220" width="2" height="1"/><rect x="16" y="230" width="2" height="1"/><rect x="16" y="240" width="2" height="1"/><rect x="16" y="250" width="2" height="1"/><rect x="16" y="260" width="2" height="1"/><rect x="16" y="270" width="2" height="1"/><rect x="16" y="280" width="2" height="1"/><rect x="16" y="290" width="2" height="1"/><rect x="16" y="300" width="2" height="1"/><rect x="16" y="310" width="2" height="1"/><rect x="16" y="320" width="2" height="1"/><rect x="16" y="330" width="2" height="1"/><rect x="16" y="340" width="2" height="1"/><rect x="16" y="350" width="2" height="1"/><rect x="16" y="360" width="2" height="1"/><rect x="16" y="370" width="2" height="1"/><rect x="16" y="380" width="2" height="1"/><rect x="16" y="390" width="2" height="1"/><rect x="624" y="100" width="2" height="1"/><rect x="624" y="110" width="2" height="1"/><rect x="624" y="120" width="2" height="1"/><rect x="624" y="130" width="4" height="1"/><rect x="624" y="140" width="2" height="1"/><rect x="624" y="150" width="2" height="1"/><rect x="624" y="160" width="2" height="1"/><rect x="624" y="170" width="2" height="1"/><rect x="624" y="180" width="4" height="1"/><rect x="624" y="190" width="2" height="1"/><rect x="624" y="200" width="2" height="1"/><rect x="624" y="210" width="2" height="1"/><rect x="624" y="220" width="2" height="1"/><rect x="624" y="230" width="4" height="1"/><rect x="624" y="240" width="2" height="1"/><rect x="624" y="250" width="2" height="1"/><rect x="624" y="260" width="2" height="1"/><rect x="624" y="270" width="2" height="1"/><rect x="624" y="280" width="4" height="1"/><rect x="624" y="290" width="2" height="1"/><rect x="624" y="300" width="2" height="1"/><rect x="624" y="310" width="2" height="1"/><rect x="624" y="320" width="2" height="1"/><rect x="624" y="330" width="4" height="1"/><rect x="624" y="340" width="2" height="1"/><rect x="624" y="350" width="2" height="1"/><rect x="624" y="360" width="2" height="1"/><rect x="624" y="370" width="2" height="1"/><rect x="624" y="380" width="4" height="1"/><rect x="624" y="390" width="2" height="1"/><rect x="79" y="93" width="1" height="2"/><rect x="139" y="93" width="1" height="2"/><rect x="199" y="93" width="1" height="2"/><rect x="259" y="93" width="1" height="2"/><rect x="319" y="93" width="1" height="2"/><rect x="379" y="93" width="1" height="2"/><rect x="439" y="93" width="1" height="2"/><rect x="499" y="93" width="1" height="2"/><rect x="559" y="93" width="1" height="2"/><rect x="619" y="93" width="1" height="2"/></g>
</svg>
<div class="t" style="left:50px">H R O F F T</div>
<div class="g" style="left:19px;top:18px">UT2510260450.png</div>
<div class="bg" style="position:absolute;left:124px;top:25px;width:42px;height:14px"></div>
<div class="g" style="left:124px;top:23px;width:42px">meteor</div>
<div class="g" style="left:19px;top:38px">25.10.26 04:50</div>
<div class="g" style="left:139px;top:38px">0..</div>
<div class="g" style="left:179px;top:3px">Observer           : Masaki Kano</div>
<div class="g" style="left:179px;top:15px">Receiving Location : Shibukawa, Gunma, Japan</div>
<div class="g" style="left:179px;top:27px">Receiver           : RTL-SDR SDR# 43dB L15 96.7MHz CW</div>
<div class="g" style="left:179px;top:39px">Receiving Antenna  : 5el Yagi Az 280 for Seoul</div>
<div class="a" style="top:72px">kHz</div>
<div class="a" style="top:121px">1.1</div>
<div class="a" style="top:171px">1.0</div>
<div class="a" style="top:221px">0.9</div>
<div class="a" style="top:271px">0.8</div>
<div class="a" style="top:321px">0.7</div>
<div class="a" style="top:371px">0.6</div>
<div class="g tl" style="left:56px;width:24px">0451</div>
<div class="g tl" style="left:116px;width:24px">0452</div>
<div class="g tl" style="left:176px;width:24px">0453</div>
<div class="g tl" style="left:236px;width:24px">0454</div>
<div class="g tl" style="left:296px;width:24px">0455</div>
<div class="g tl" style="left:356px;width:24px">0456</div>
<div class="g tl" style="left:416px;width:24px">0457</div>
<div class="g tl" style="left:476px;width:24px">0458</div>
<div class="g tl" style="left:536px;width:24px">0459</div>
<div class="g tl" style="left:596px;width:28px">0500</div>
</body>
</html>
